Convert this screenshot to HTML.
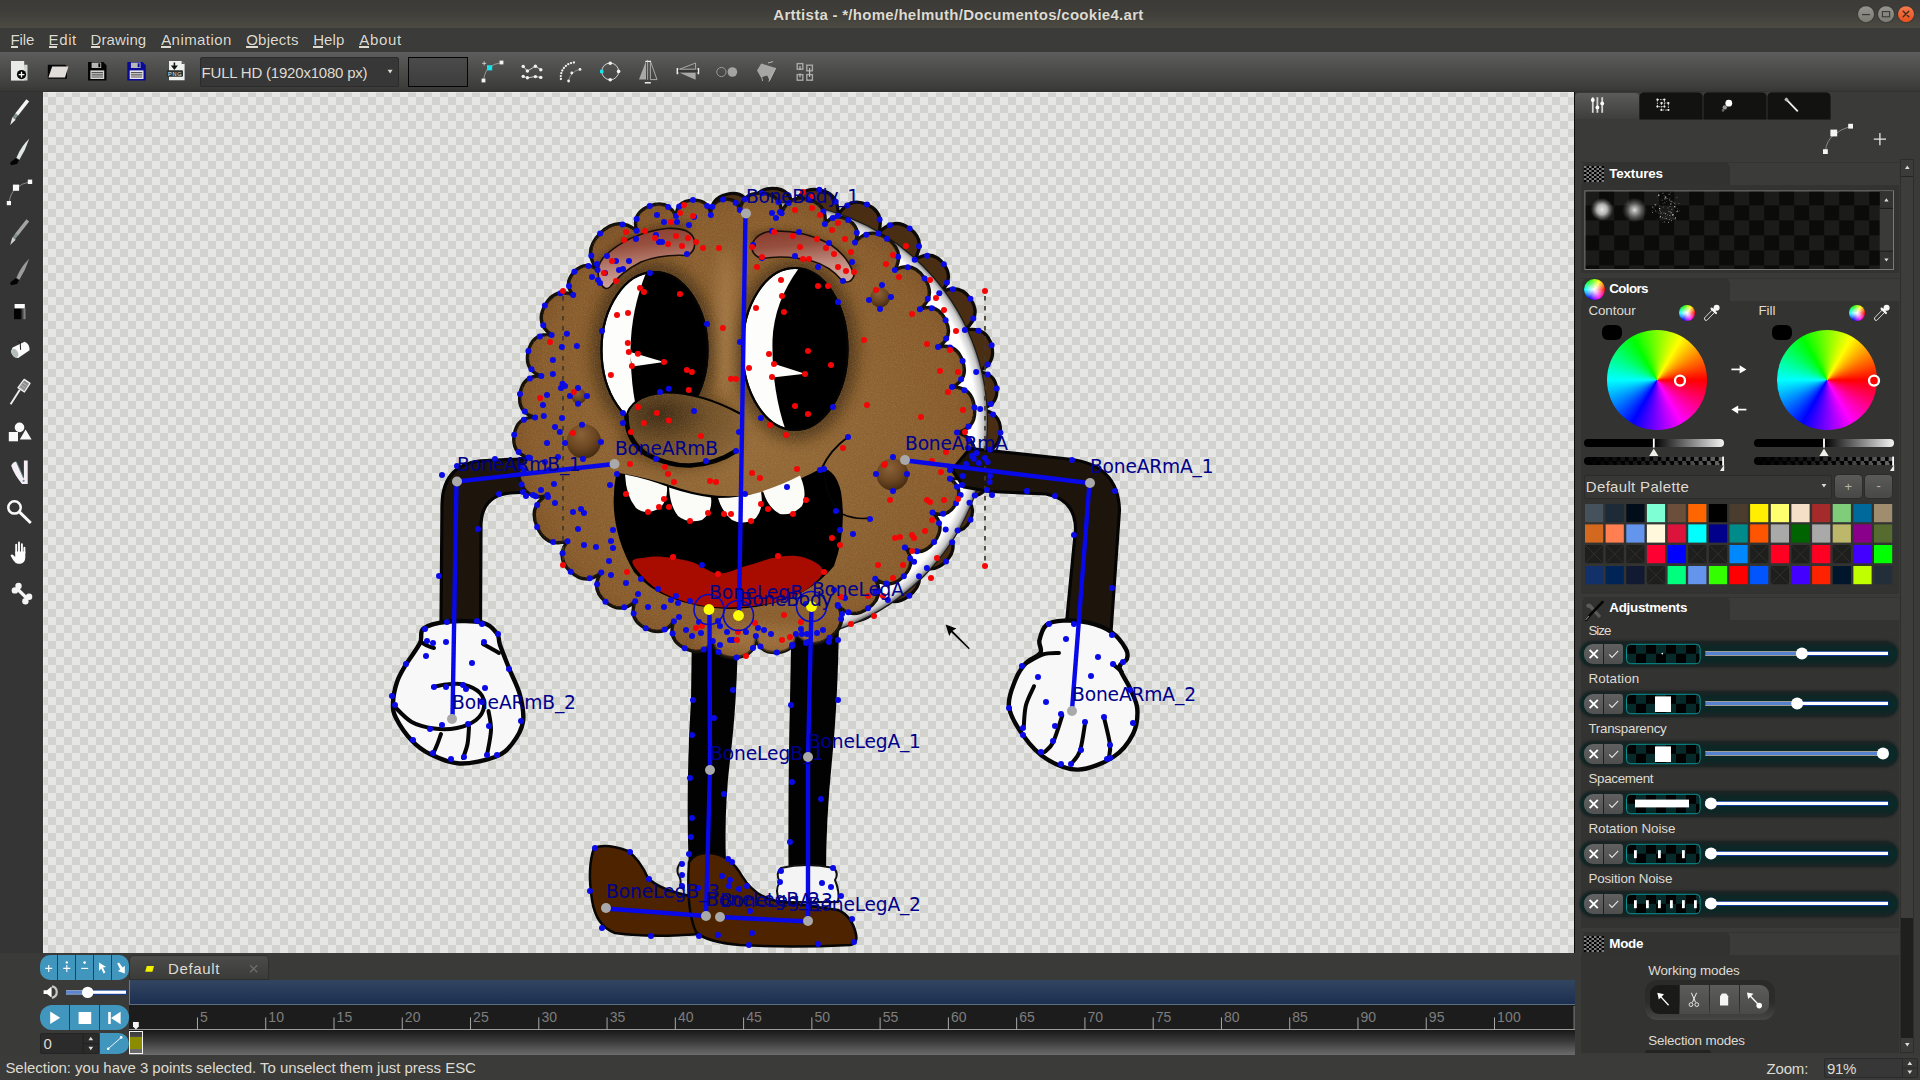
<!DOCTYPE html>
<html lang="en"><head><meta charset="utf-8"><title>Arttista - */home/helmuth/Documentos/cookie4.art</title>
<style>
*{margin:0;padding:0}
html,body{width:1920px;height:1080px;overflow:hidden;background:#3b3b39}
body{position:relative;font-family:"Liberation Sans","DejaVu Sans",sans-serif}
#app{position:absolute;left:0;top:0;width:1920px;height:1080px;overflow:hidden;background:#3b3b39}
#app div,#app svg,#app span,#app i{position:absolute}
.t{white-space:pre;display:block}
svg{overflow:visible;display:block}
.titlebar{left:0;top:0;width:1920px;height:28px;background:linear-gradient(#3c3b37 0,#3e3d39 35%,#4b4a42 100%)}
.titlebar .t,.menubar .t{text-shadow:0 0 1px rgba(0,0,0,.4)}
.menubar,.toolbar,.lefttools,.panel,.timeline,.statusbar{left:0;top:0;width:0;height:0}
.mbg{left:0;top:28px;width:1920px;height:24px;background:#3b3b39}
.tbg{left:0;top:52px;width:1920px;height:40px;background:linear-gradient(#5c5d5c 0,#4e4e4d 40%,#3e3e3d 85%,#373736 97%,#2e2e2d 100%)}
.lbg{left:0;top:92px;width:43px;height:861px;background:#353535}
.pbg{left:1575px;top:92px;width:345px;height:963px;background:#3a3a39}
.bbg{left:0;top:953px;width:1575px;height:102px;background:#3a3a38}
.sbg{left:0;top:1055px;width:1920px;height:25px;background:#3b3b39}
.ul{height:1.4px;background:#dfdbd2;display:block}
.canvas{left:43px;top:92px;width:1531px;height:861px;overflow:hidden;background:#e6e6e4 conic-gradient(#d2d3cf 0 25%,#e6e6e4 0 50%,#d2d3cf 0 75%,#e6e6e4 0) 5px -3px/16px 16px;box-shadow:inset 1px 1px 0 rgba(255,255,255,.3)}
.cedge{left:1574px;top:92px;width:1px;height:861px;background:#0c0c0c}
</style></head>
<body><div id="app">
<div class="mbg"></div><div class="tbg"></div><div class="lbg"></div><div class="pbg"></div><div class="bbg"></div><div class="sbg"></div>
<div class="titlebar"><span class="t" style="left:773.30px;top:5.50px;font:bold 15px/18px 'Liberation Sans','DejaVu Sans',sans-serif;color:#dfdbd2;letter-spacing:0.282px;">Arttista - */home/helmuth/Documentos/cookie4.art</span><svg style="left:1850px;top:0px;" width="70" height="28" viewBox="1850 0 70 28"><defs><linearGradient id="wbg" x1="0" y1="0" x2="0" y2="1"><stop offset="0" stop-color="#95958e"/><stop offset="1" stop-color="#7b7b75"/></linearGradient><linearGradient id="wbr" x1="0" y1="0" x2="0" y2="1"><stop offset="0" stop-color="#f47a4c"/><stop offset="1" stop-color="#e8501c"/></linearGradient></defs><circle cx="1866" cy="14.2" r="9" fill="#33322e" opacity="0.55"/><circle cx="1866" cy="14.2" r="8" fill="url(#wbg)"/><path d="M1862 14.6H1870" stroke="#3a3a36" stroke-width="1.2"/><circle cx="1886" cy="14.2" r="9" fill="#33322e" opacity="0.55"/><circle cx="1886" cy="14.2" r="8" fill="url(#wbg)"/><rect x="1882.4" y="11.6" width="7.2" height="5.2" fill="none" stroke="#3a3a36" stroke-width="1.1"/><circle cx="1906" cy="14.2" r="9" fill="#33322e" opacity="0.55"/><circle cx="1906" cy="14.2" r="8" fill="url(#wbr)"/><path d="M1903.2 11.2L1908.8 16.8M1908.8 11.2L1903.2 16.8" stroke="#3a2a1a" stroke-width="1.3" stroke-linecap="round"/></svg></div>
<div class="menubar"><span class="t mi" style="left:10.50px;top:30.80px;font:normal 15px/18px 'Liberation Sans','DejaVu Sans',sans-serif;color:#dfdbd2;letter-spacing:-0.124px;">File</span><span class="t mi" style="left:48.60px;top:30.80px;font:normal 15px/18px 'Liberation Sans','DejaVu Sans',sans-serif;color:#dfdbd2;letter-spacing:0.614px;">Edit</span><span class="t mi" style="left:90.60px;top:30.80px;font:normal 15px/18px 'Liberation Sans','DejaVu Sans',sans-serif;color:#dfdbd2;letter-spacing:0.095px;">Drawing</span><span class="t mi" style="left:161.20px;top:30.80px;font:normal 15px/18px 'Liberation Sans','DejaVu Sans',sans-serif;color:#dfdbd2;letter-spacing:0.425px;">Animation</span><span class="t mi" style="left:246.20px;top:30.80px;font:normal 15px/18px 'Liberation Sans','DejaVu Sans',sans-serif;color:#dfdbd2;letter-spacing:0.240px;">Objects</span><span class="t mi" style="left:313.20px;top:30.80px;font:normal 15px/18px 'Liberation Sans','DejaVu Sans',sans-serif;color:#dfdbd2;letter-spacing:0.080px;">Help</span><span class="t mi" style="left:359.20px;top:30.80px;font:normal 15px/18px 'Liberation Sans','DejaVu Sans',sans-serif;color:#dfdbd2;letter-spacing:0.724px;">About</span><i class="ul" style="left:10.5px;top:46.3px;width:7.5px"></i><i class="ul" style="left:48.6px;top:46.3px;width:8.5px"></i><i class="ul" style="left:90.6px;top:46.3px;width:9.6px"></i><i class="ul" style="left:161.2px;top:46.3px;width:9.6px"></i><i class="ul" style="left:246.2px;top:46.3px;width:11.5px"></i><i class="ul" style="left:313.2px;top:46.3px;width:9.6px"></i><i class="ul" style="left:359.2px;top:46.3px;width:9.6px"></i></div>
<div class="toolbar"><svg style="left:0px;top:52px;" width="830" height="40" viewBox="0 52 830 40"><path d="M24.2 64.8h3.3v15.8h-4z" fill="#d3d7d3"/><path d="M11 61h13.2v19.6H11z" fill="#e7eae7"/><circle cx="21.5" cy="74.6" r="4.6" fill="#050505"/><path d="M18.6 74.6h5.8M21.5 71.7v5.8" stroke="#fff" stroke-width="1.3"/><path d="M47.8 64.8h17.6l1.6 1.6v12.4H47.8z" fill="#060606"/><path d="M52.2 66.6h16.2l-3.4 11H48.4z" fill="#e2ddd9"/><path d="M88 62h15.2l3.3 3.3v15.3H88z" fill="#050505"/><rect x="91.6" y="62.6" width="9.6" height="5.4" fill="#b8b8b6"/><rect x="98.4" y="63.3" width="1.9" height="3.9" fill="#050505"/><rect x="90.4" y="70.4" width="13.8" height="8.6" fill="#d4d4d2"/><path d="M91.6 72.6h11.4M91.6 74.8h11.4M91.6 77h11.4" stroke="#555" stroke-width="1.2"/><path d="M127.3 62h15.2l3.3 3.3v15.3H127.3z" fill="#0a0a96"/><rect x="130.9" y="62.6" width="9.6" height="5.4" fill="#b8b8b6"/><rect x="137.7" y="63.3" width="1.9" height="3.9" fill="#0a0a96"/><rect x="129.7" y="70.4" width="13.8" height="8.6" fill="#e8e8ee"/><path d="M130.9 72.6h11.4M130.9 74.8h11.4M130.9 77h11.4" stroke="#555" stroke-width="1.2"/><path d="M169 61h12.6l3 3v16.2H169z" fill="#eef0ee"/><path d="M181.6 61l3 3h-3z" fill="#555"/><path d="M174.4 62.6v4.2M172.4 66.2l2 2.6 2-2.6z" stroke="#111" stroke-width="1.5" fill="#111"/><rect x="166.8" y="70.3" width="16.2" height="6.4" rx="1" fill="#2b302d"/><text x="168" y="75.8" font-family="Liberation Sans, sans-serif" font-size="5.6" fill="#e8e8e8" textLength="13.6">PNG</text><path d="M483.5 80.5Q485 70 489.6 67.4Q494 63.6 501.4 62.6" stroke="#aaa" stroke-width="0.8" fill="none"/><rect x="487" y="65.2" width="5.2" height="5.2" fill="#15e4ec"/><rect x="499.6" y="60.6" width="3.8" height="3.8" fill="#f4f4f4"/><rect x="481.6" y="78.6" width="3.8" height="3.8" fill="#f4f4f4"/><path d="M482.2 63.4h4M484.2 61.4v4" stroke="#ddd" stroke-width="0.8"/><path d="M523.2 66.4L527.4 71L535.4 66.2L540.8 69.8" stroke="#ddd" stroke-width="0.9" fill="none"/><circle cx="523.2" cy="66.4" r="1.7" fill="#f2f2f2"/><circle cx="527.4" cy="71" r="1.7" fill="#f2f2f2"/><circle cx="535.4" cy="66.2" r="1.7" fill="#f2f2f2"/><circle cx="540.8" cy="69.8" r="1.7" fill="#f2f2f2"/><path d="M523.2 76.4L527.4 77.8L535.4 76.6L540.8 77.4" stroke="#ddd" stroke-width="0.9" fill="none"/><circle cx="523.2" cy="76.4" r="1.7" fill="#f2f2f2"/><circle cx="527.4" cy="77.8" r="1.7" fill="#f2f2f2"/><circle cx="535.4" cy="76.6" r="1.7" fill="#f2f2f2"/><circle cx="540.8" cy="77.4" r="1.7" fill="#f2f2f2"/><circle cx="560.9" cy="79.0" r="1.15" fill="#f0f0f0"/><circle cx="560.8" cy="76.1" r="1.15" fill="#f0f0f0"/><circle cx="561.3" cy="73.2" r="1.15" fill="#f0f0f0"/><circle cx="562.3" cy="70.5" r="1.15" fill="#f0f0f0"/><circle cx="563.9" cy="68.0" r="1.15" fill="#f0f0f0"/><circle cx="565.9" cy="65.9" r="1.15" fill="#f0f0f0"/><circle cx="568.3" cy="64.2" r="1.15" fill="#f0f0f0"/><circle cx="571.0" cy="63.1" r="1.15" fill="#f0f0f0"/><circle cx="573.9" cy="62.5" r="1.15" fill="#f0f0f0"/><path d="M568.6 81q1.6-9.4 11.4-11.6" stroke="#aaa" stroke-width="0.7" fill="none"/><circle cx="568.6" cy="81" r="1.4" fill="#f0f0f0"/><circle cx="571.8" cy="73" r="1.4" fill="#f0f0f0"/><circle cx="580" cy="69.4" r="1.4" fill="#f0f0f0"/><circle cx="610.2" cy="71.4" r="8.4" fill="none" stroke="#ddd" stroke-width="0.9"/><rect x="600" y="69.8" width="3.4" height="3.4" fill="#15e4ec"/><circle cx="610.2" cy="63.2" r="1.8" fill="#f2f2f2"/><circle cx="618.6" cy="71.4" r="1.8" fill="#f2f2f2"/><circle cx="610.2" cy="79.8" r="1.8" fill="#f2f2f2"/><path d="M639 79.6l7-18.6v18.6z" fill="#a8a8a8"/><path d="M650.4 61l6.6 18.6h-6.6z" fill="none" stroke="#a8a8a8" stroke-width="1"/><path d="M645.4 61.4h5.6M644.8 82.8h6" stroke="#eee" stroke-width="1.4"/><path d="M647.6 59.8v20" stroke="#ccc" stroke-width="0.7"/><path d="M679.6 69.2l16-6.2v6.2z" fill="none" stroke="#a8a8a8" stroke-width="1"/><path d="M679.6 72.8h16v7z" fill="#a8a8a8"/><path d="M677.4 68v6.2M698.4 68v6.2" stroke="#eee" stroke-width="1.6"/><path d="M678 71h20" stroke="#222" stroke-width="1"/><circle cx="721.4" cy="72" r="4.6" fill="none" stroke="#9a9a9a" stroke-width="1"/><circle cx="732.4" cy="72" r="4.8" fill="#a4a4a4"/><path d="M757 70.4l4.2-7 14.6 4.6-6 13-2.6-5.6-6.2 2z" fill="#a6a6a6"/><path d="M768 63l5-1.4M775.8 68l-7 13.6" stroke="#b8b8b8" stroke-width="1" fill="none"/><path d="M761.6 76.4l1 4.6" stroke="#aaa" stroke-width="1"/><rect x="797.2" y="63.6" width="5.6" height="5.6" fill="none" stroke="#a8a8a8" stroke-width="1.4"/><rect x="806.8" y="65.2" width="5.6" height="5.6" fill="none" stroke="#a8a8a8" stroke-width="1.4"/><rect x="797.2" y="74.6" width="5.6" height="5.6" fill="none" stroke="#a8a8a8" stroke-width="1.4"/><rect x="806.8" y="74.6" width="5.6" height="5.6" fill="none" stroke="#a8a8a8" stroke-width="1.4"/><path d="M800 66v4M809.6 68v9M800 73.6v4" stroke="#bbb" stroke-width="1.2"/></svg><div class="a" style="left:200px;top:57px;width:199px;height:30px;background:#373737;border:1px solid #2b2b2b;box-sizing:border-box;border-radius:2px"></div><span class="t" style="left:201.60px;top:63.80px;font:normal 15px/18px 'Liberation Sans','DejaVu Sans',sans-serif;color:#dfdbd2;letter-spacing:-0.208px;">FULL HD (1920x1080 px)</span><svg style="left:386px;top:68px;" width="9" height="7" viewBox="386 68 9 7"><path d="M387.6 69.8h5l-2.5 3.6z" fill="#dfdbd2"/></svg><div class="a" style="left:408px;top:57px;width:60px;height:30px;background:linear-gradient(#4b4b4b,#3d3d3d);border:1px solid #050505;box-sizing:border-box"></div></div>
<div class="lefttools"><svg style="left:0px;top:92px;" width="43" height="530" viewBox="0 92 43 530"><path d="M27.800 100.4L16.400 114.8" stroke="#f4f4f4" stroke-width="3.500" stroke-linecap="butt"/><path d="M16.800 114.3L13.800 118.4" stroke="#83938d" stroke-width="3.300"/><path d="M12.300 117.2L15.700 119.8L10.200 125Z" fill="#e8e8e8"/><path d="M29.200 138.8Q21 146.5 16.400 157.8L19.400 159.8Q25.400 150.5 29.200 138.8z" fill="#dfe9e4"/><path d="M15.600 158.2l3.400 2.300-2 3.600-5.800 1.200-1.200-2.600z" fill="#020202"/><path d="M9 203Q10.4 192.6 16.2 188Q22 183.4 29.8 181.8" stroke="#999" stroke-width="0.8" fill="none"/><rect x="12.9" y="184.6" width="6.2" height="6.2" fill="#fafafa"/><rect x="27.8" y="179.6" width="4.4" height="4.4" fill="#fafafa"/><rect x="6.8" y="201" width="4.2" height="4.2" fill="#fafafa"/><path d="M27.800 220.4L16.400 234.8" stroke="#a4a4a4" stroke-width="3.500" stroke-linecap="butt"/><path d="M16.800 234.3L13.800 238.4" stroke="#83938d" stroke-width="3.300"/><path d="M12.300 237.2L15.700 239.8L10.200 245Z" fill="#cfd4d2"/><path d="M29.200 258.8Q21 266.5 16.400 277.8L19.400 279.8Q25.400 270.5 29.200 258.8z" fill="#9c9c9c"/><path d="M15.600 278.2l3.400 2.300-2 3.600-5.800 1.200-1.200-2.600z" fill="#020202"/><defs><linearGradient id="bk" x1="0" x2="1"><stop offset="0.55" stop-color="#020202"/><stop offset="1" stop-color="#9a9a9a"/></linearGradient></defs><rect x="14.6" y="304" width="10.2" height="4.6" fill="#fbfbfb"/><rect x="14" y="308.6" width="11.4" height="10.6" fill="url(#bk)"/><path d="M12.600 347.600L24.600 341.800Q29.600 343.400 29.600 350.200L18.200 358Q12.200 357.400 11 351.400Z" fill="#fbfbfb"/><ellipse cx="14.900" cy="353.200" rx="3" ry="4.500" transform="rotate(-28 14.900 353.200)" fill="#b4beb8"/><path d="M17.600 341.800q1.400-1.600 2.600 0.600l0.400 7.400" stroke="#1c1c1c" stroke-width="1" fill="none"/><path d="M19.800 389.800L10.600 404.200" stroke="#f0f0f0" stroke-width="1.900"/><path d="M24.200 379.400L30 383.400L24.400 392L18 387.600Z" fill="#8e8e8e" stroke="#f2f2f2" stroke-width="1.300" stroke-linejoin="round"/><path d="M21.200 385.200l4 2.800M22.800 382.800l4 2.800M20 387.400l3.600 2.600" stroke="#d8d8d8" stroke-width="0.600"/><circle cx="19.5" cy="427.4" r="4.8" fill="#fafafa"/><rect x="8.8" y="432" width="9.2" height="9.3" fill="#fafafa"/><path d="M25.6 429.6l6 9.9H19.8z" fill="#fafafa"/><path d="M11.200 465.800Q12.800 461.800 16.200 461.400L23.900 478.400L23.900 460.400L27.700 460.400L27.700 483.900L22 483.900Q14.400 475 11.200 465.800Z" fill="#f5eef7"/><path d="M16.600 462.200l7 16" stroke="#5e8a86" stroke-width="1"/><circle cx="23.600" cy="480.800" r="1.100" fill="#6a9a94"/><circle cx="14.500" cy="507.400" r="6.200" fill="none" stroke="#fbfbfb" stroke-width="2.500"/><path d="M19.600 512.200L30.800 523" stroke="#fbfbfb" stroke-width="3"/><path d="M16.200 553v-8.400M19 552.500v-10M21.900 552.500v-8.400M24.400 553v-5.200" stroke="#fdfdfd" stroke-width="1.900" stroke-linecap="round"/><path d="M15.200 551.500h10.100v6.300q-0.300 5.200-4.600 5.900h-2.800q-2.800-0.500-4.800-3.700l-2.600-4.400q1.300-2 3-0.400l1.700 1.900z" fill="#fdfdfd"/><path d="M17.400 589L27 598.400" stroke="#f4f4f4" stroke-width="3.400"/><circle cx="18.500" cy="585.900" r="3.200" fill="#f4f4f4"/><circle cx="14.900" cy="590.400" r="3.200" fill="#f4f4f4"/><circle cx="29.100" cy="596.800" r="3.200" fill="#f4f4f4"/><circle cx="25.400" cy="601.200" r="3.200" fill="#f4f4f4"/></svg></div>
<div class="canvas"><svg style="left:0;top:0" width="1531" height="861" viewBox="43 92 1531 861"><defs>
<radialGradient id="ckf" cx="745" cy="425" r="235" gradientUnits="userSpaceOnUse"><stop offset="0" stop-color="#956b39"/><stop offset="0.55" stop-color="#8d6232"/><stop offset="0.9" stop-color="#875b2c"/><stop offset="1" stop-color="#7c5126"/></radialGradient>
<radialGradient id="crm" cx="768" cy="421" r="220" gradientUnits="userSpaceOnUse"><stop offset="0" stop-color="#ffffff"/><stop offset="0.945" stop-color="#ffffff"/><stop offset="0.98" stop-color="#c8c8c8"/><stop offset="1" stop-color="#5a5a5a"/></radialGradient>
<radialGradient id="chip" cx="0.42" cy="0.3" r="0.75"><stop offset="0" stop-color="#8a6238"/><stop offset="0.55" stop-color="#6b4621"/><stop offset="1" stop-color="#3f2710"/></radialGradient>
<linearGradient id="brow" x1="0" y1="0" x2="0.2" y2="1"><stop offset="0" stop-color="#87382a"/><stop offset="0.35" stop-color="#97503f"/><stop offset="0.7" stop-color="#bb8679"/><stop offset="1" stop-color="#cda69b"/></linearGradient>
<radialGradient id="nose" cx="0.3" cy="0.3" r="0.85"><stop offset="0" stop-color="#3d2a14"/><stop offset="0.5" stop-color="#6f4f28"/><stop offset="1" stop-color="#8a6436"/></radialGradient>
<filter id="bl6" x="-30%" y="-30%" width="160%" height="160%"><feGaussianBlur stdDeviation="7"/></filter>
<filter id="bl3" x="-30%" y="-30%" width="160%" height="160%"><feGaussianBlur stdDeviation="3"/></filter>
<filter id="grain" x="0" y="0" width="100%" height="100%"><feTurbulence type="fractalNoise" baseFrequency="0.9" numOctaves="2" seed="4" result="n"/><feColorMatrix in="n" type="matrix" values="0 0 0 0 0.62  0 0 0 0 0.42  0 0 0 0 0.2  1.2 0 0 0 -0.45"/><feComposite in2="SourceGraphic" operator="in"/></filter>
<clipPath id="fcclip"><path d="M541.3 376.1C529.7 371.9 525.3 363.3 528.4 351.0C531.5 338.6 539.4 333.2 551.6 335.0C540.7 327.5 538.4 317.5 544.9 305.5C551.3 293.5 561.0 290.0 573.2 295.0C566.7 287.2 567.1 279.3 574.4 271.7C581.7 264.2 589.6 263.6 597.6 269.9C587.6 257.5 588.4 245.1 600.1 233.4C611.8 221.7 624.2 220.8 636.6 230.8C633.4 218.9 637.9 210.5 649.7 206.0C661.5 201.5 670.5 204.9 676.0 215.9C676.7 205.8 682.5 200.4 693.0 200.1C703.4 199.9 709.5 204.9 710.8 215.0C710.2 206.4 714.4 201.2 723.1 199.6C731.9 198.1 737.6 201.7 739.9 210.0C742.2 198.0 749.7 192.3 762.2 193.3C774.8 194.3 781.4 201.1 781.6 213.3C786.0 201.1 795.0 196.4 808.0 199.6C821.0 202.8 826.7 211.1 824.9 224.0C831.2 215.8 839.0 214.5 848.1 220.0C857.1 225.5 859.4 233.2 855.0 242.5C864.1 231.7 875.0 230.4 887.0 238.7C899.0 246.9 901.7 257.5 894.9 270.0C907.0 263.9 917.2 266.8 924.7 278.6C932.2 290.3 930.6 300.8 919.9 309.2C931.5 305.1 940.2 308.8 945.6 320.2C951.1 331.5 948.5 340.7 938.0 347.0C950.1 344.2 958.4 348.9 962.6 360.9C966.8 372.9 963.2 381.8 952.0 387.0C965.3 386.9 973.0 393.9 974.5 407.6C976.0 421.2 970.0 429.7 957.0 432.5C970.2 435.9 975.9 444.9 973.8 458.7C971.7 472.6 963.6 479.5 949.9 478.8C959.1 484.9 961.2 493.2 956.0 503.3C950.8 513.4 942.8 516.5 932.5 512.5C941.8 521.5 942.4 531.6 934.1 542.1C925.9 552.6 915.9 554.5 904.9 547.5C913.1 557.1 912.7 566.8 903.8 576.2C894.8 585.5 885.1 586.4 875.2 578.7C881.7 590.4 879.2 600.4 868.0 608.3C856.7 616.2 846.4 615.0 837.7 604.9C844.8 617.9 842.1 629.1 829.5 637.8C817.0 646.6 805.6 645.2 795.9 634.0C795.3 645.6 788.8 652.0 776.8 652.6C764.8 653.2 757.7 647.6 755.9 636.0C756.1 648.7 749.5 656.0 736.6 657.5C723.7 659.0 715.6 653.4 712.8 641.1C705.9 651.8 696.4 654.2 684.7 648.3C673.0 642.4 669.4 633.2 673.9 621.3C666.9 632.0 657.3 634.3 645.7 628.3C634.0 622.3 630.5 613.0 635.2 601.2C625.8 610.1 615.7 610.3 605.5 601.7C595.4 593.0 593.9 583.1 601.3 572.4C591.2 581.3 580.8 581.0 570.7 571.7C560.5 562.3 559.4 552.0 567.5 541.2C553.4 545.7 543.1 540.8 537.1 526.9C531.1 513.0 534.6 502.2 547.4 495.0C536.0 499.3 527.3 495.7 521.6 484.5C516.0 473.3 518.4 464.2 528.7 457.6C517.2 454.6 512.3 446.8 514.2 434.7C516.1 422.6 523.2 416.7 535.1 417.4C523.3 414.3 518.2 406.4 520.0 394.0C521.9 381.6 529.1 375.5 541.3 376.1Z"/></clipPath>
<clipPath id="eyeL"><ellipse cx="654.500" cy="350" rx="53" ry="78"/></clipPath>
<clipPath id="eyeR"><ellipse cx="795" cy="349" rx="52.500" ry="81"/></clipPath>
</defs><path d="M980.2 409.0C994.6 411.5 1001.4 419.5 1000.4 432.7C999.3 445.9 991.2 452.7 976.6 452.9C990.0 459.4 994.4 469.3 989.6 481.9C984.8 494.5 974.9 498.9 960.6 494.9C971.6 500.8 975.0 509.3 970.5 519.7C966.0 530.1 957.6 533.4 945.7 529.6C955.3 540.9 955.5 551.8 946.0 561.4C936.5 571.1 925.7 571.2 914.1 561.8C922.6 575.2 921.0 586.8 909.3 595.7C897.7 604.7 886.1 603.3 875.3 591.6C879.6 604.7 876.0 614.0 864.6 618.9C853.2 623.9 843.9 620.2 837.3 608.2C838.3 621.7 832.6 629.8 820.5 631.9C808.4 633.9 800.3 628.2 796.8 615.1C796.8 629.3 790.1 637.2 777.2 638.3C764.4 639.4 756.5 632.8 754.0 618.7C749.8 632.1 741.2 637.5 728.8 634.8C716.5 632.0 711.0 623.5 712.8 609.6C704.8 621.8 694.6 624.9 683.0 618.7C671.3 612.5 668.2 602.3 673.8 588.8C665.0 600.2 654.8 602.5 643.8 595.4C632.8 588.4 630.6 578.2 637.2 565.4C626.4 572.4 617.1 571.4 609.9 562.2C602.7 553.1 603.7 543.8 613.1 534.9C599.2 542.2 588.0 539.8 580.3 527.9C572.5 515.9 574.9 504.8 587.3 495.1C573.9 498.8 564.8 494.6 560.4 482.8C556.0 471.1 560.2 461.9 572.6 455.9C558.3 456.2 550.2 449.7 548.8 436.8C547.4 423.9 553.9 415.8 567.9 412.9C554.8 410.2 548.7 402.6 550.1 390.6C551.5 378.5 559.1 372.4 572.5 372.7C559.0 367.4 554.0 358.2 557.7 345.6C561.4 333.0 570.7 328.0 584.8 330.8C573.0 320.9 571.0 309.8 579.1 298.3C587.1 286.8 598.2 284.8 611.6 292.5C603.2 283.9 602.6 275.2 609.6 267.0C616.7 258.7 625.4 258.0 635.2 265.0C626.7 251.5 628.4 239.9 640.2 230.8C652.0 221.7 663.7 223.0 674.6 234.6C670.6 222.1 674.2 213.2 685.2 208.6C696.2 203.9 705.1 207.5 711.3 219.2C709.4 205.5 714.8 197.0 726.9 194.2C739.1 191.4 747.6 196.7 751.9 209.9C752.7 196.1 759.5 188.8 771.9 188.4C784.4 188.0 791.7 194.8 793.4 208.4C797.2 193.9 806.0 187.6 819.4 189.8C832.7 192.1 839.0 200.9 837.9 215.8C845.0 203.0 854.9 199.1 867.0 204.5C879.1 209.8 883.0 219.7 878.4 233.5C888.1 222.3 898.7 220.6 909.6 228.4C920.6 236.3 922.3 246.9 914.7 259.7C926.5 252.6 936.4 254.1 943.8 264.2C951.2 274.2 949.6 284.1 939.3 293.2C952.2 285.9 962.8 287.8 970.4 298.8C978.1 309.8 976.2 320.4 964.9 329.9C979.1 327.4 988.2 332.7 991.6 345.3C995.0 357.9 989.7 367.0 976.2 372.0C988.5 371.8 995.5 377.4 996.7 388.5C997.9 399.6 992.3 406.5 980.2 409.0Z" fill="#4a2e13" stroke="#0c0a08" stroke-width="3.200" stroke-linejoin="round"/><circle cx="768" cy="421.500" r="219.500" fill="url(#crm)" stroke="#1a1a1a" stroke-width="1.200"/><path d="M552 457.500L486 460.500Q443 462 442 504L441 624L480.500 624L481 524Q482 496 510 493L552 491Z" fill="#1d150b" stroke="#050505" stroke-width="3.200" stroke-linejoin="round"/><path d="M692 625L738 625Q737.500 700 730 760Q724 810 726 862L688.500 862Q686 780 691 700Z" fill="#020202"/><path d="M791.500 620L839 620Q838 700 832 760Q826 820 826 872L788.500 872Q788 780 790 700Z" fill="#020202"/><path d="M541.3 376.1C529.7 371.9 525.3 363.3 528.4 351.0C531.5 338.6 539.4 333.2 551.6 335.0C540.7 327.5 538.4 317.5 544.9 305.5C551.3 293.5 561.0 290.0 573.2 295.0C566.7 287.2 567.1 279.3 574.4 271.7C581.7 264.2 589.6 263.6 597.6 269.9C587.6 257.5 588.4 245.1 600.1 233.4C611.8 221.7 624.2 220.8 636.6 230.8C633.4 218.9 637.9 210.5 649.7 206.0C661.5 201.5 670.5 204.9 676.0 215.9C676.7 205.8 682.5 200.4 693.0 200.1C703.4 199.9 709.5 204.9 710.8 215.0C710.2 206.4 714.4 201.2 723.1 199.6C731.9 198.1 737.6 201.7 739.9 210.0C742.2 198.0 749.7 192.3 762.2 193.3C774.8 194.3 781.4 201.1 781.6 213.3C786.0 201.1 795.0 196.4 808.0 199.6C821.0 202.8 826.7 211.1 824.9 224.0C831.2 215.8 839.0 214.5 848.1 220.0C857.1 225.5 859.4 233.2 855.0 242.5C864.1 231.7 875.0 230.4 887.0 238.7C899.0 246.9 901.7 257.5 894.9 270.0C907.0 263.9 917.2 266.8 924.7 278.6C932.2 290.3 930.6 300.8 919.9 309.2C931.5 305.1 940.2 308.8 945.6 320.2C951.1 331.5 948.5 340.7 938.0 347.0C950.1 344.2 958.4 348.9 962.6 360.9C966.8 372.9 963.2 381.8 952.0 387.0C965.3 386.9 973.0 393.9 974.5 407.6C976.0 421.2 970.0 429.7 957.0 432.5C970.2 435.9 975.9 444.9 973.8 458.7C971.7 472.6 963.6 479.5 949.9 478.8C959.1 484.9 961.2 493.2 956.0 503.3C950.8 513.4 942.8 516.5 932.5 512.5C941.8 521.5 942.4 531.6 934.1 542.1C925.9 552.6 915.9 554.5 904.9 547.5C913.1 557.1 912.7 566.8 903.8 576.2C894.8 585.5 885.1 586.4 875.2 578.7C881.7 590.4 879.2 600.4 868.0 608.3C856.7 616.2 846.4 615.0 837.7 604.9C844.8 617.9 842.1 629.1 829.5 637.8C817.0 646.6 805.6 645.2 795.9 634.0C795.3 645.6 788.8 652.0 776.8 652.6C764.8 653.2 757.7 647.6 755.9 636.0C756.1 648.7 749.5 656.0 736.6 657.5C723.7 659.0 715.6 653.4 712.8 641.1C705.9 651.8 696.4 654.2 684.7 648.3C673.0 642.4 669.4 633.2 673.9 621.3C666.9 632.0 657.3 634.3 645.7 628.3C634.0 622.3 630.5 613.0 635.2 601.2C625.8 610.1 615.7 610.3 605.5 601.7C595.4 593.0 593.9 583.1 601.3 572.4C591.2 581.3 580.8 581.0 570.7 571.7C560.5 562.3 559.4 552.0 567.5 541.2C553.4 545.7 543.1 540.8 537.1 526.9C531.1 513.0 534.6 502.2 547.4 495.0C536.0 499.3 527.3 495.7 521.6 484.5C516.0 473.3 518.4 464.2 528.7 457.6C517.2 454.6 512.3 446.8 514.2 434.7C516.1 422.6 523.2 416.7 535.1 417.4C523.3 414.3 518.2 406.4 520.0 394.0C521.9 381.6 529.1 375.5 541.3 376.1Z" fill="url(#ckf)" stroke="#14100a" stroke-width="3.400" stroke-linejoin="round"/><g clip-path="url(#fcclip)"><g filter="url(#bl6)" opacity="0.620"><ellipse cx="654" cy="350" rx="63" ry="89" fill="#33200a"/><ellipse cx="796" cy="350" rx="62" ry="91" fill="#33200a"/><ellipse cx="680" cy="430" rx="60" ry="38" fill="#3d2710"/></g><g filter="url(#bl6)" opacity="0.500"><ellipse cx="726" cy="320" rx="9" ry="72" fill="#b98d5a"/><ellipse cx="760" cy="640" rx="60" ry="14" fill="#b08350"/></g><g filter="url(#bl3)" opacity="0.450"><path d="M596 270Q630 226 690 226" stroke="#3a240c" stroke-width="10" fill="none"/><path d="M752 238Q810 222 856 270" stroke="#3a240c" stroke-width="10" fill="none"/></g><path d="M541.3 376.1C529.7 371.9 525.3 363.3 528.4 351.0C531.5 338.6 539.4 333.2 551.6 335.0C540.7 327.5 538.4 317.5 544.9 305.5C551.3 293.5 561.0 290.0 573.2 295.0C566.7 287.2 567.1 279.3 574.4 271.7C581.7 264.2 589.6 263.6 597.6 269.9C587.6 257.5 588.4 245.1 600.1 233.4C611.8 221.7 624.2 220.8 636.6 230.8C633.4 218.9 637.9 210.5 649.7 206.0C661.5 201.5 670.5 204.9 676.0 215.9C676.7 205.8 682.5 200.4 693.0 200.1C703.4 199.9 709.5 204.9 710.8 215.0C710.2 206.4 714.4 201.2 723.1 199.6C731.9 198.1 737.6 201.7 739.9 210.0C742.2 198.0 749.7 192.3 762.2 193.3C774.8 194.3 781.4 201.1 781.6 213.3C786.0 201.1 795.0 196.4 808.0 199.6C821.0 202.8 826.7 211.1 824.9 224.0C831.2 215.8 839.0 214.5 848.1 220.0C857.1 225.5 859.4 233.2 855.0 242.5C864.1 231.7 875.0 230.4 887.0 238.7C899.0 246.9 901.7 257.5 894.9 270.0C907.0 263.9 917.2 266.8 924.7 278.6C932.2 290.3 930.6 300.8 919.9 309.2C931.5 305.1 940.2 308.8 945.6 320.2C951.1 331.5 948.5 340.7 938.0 347.0C950.1 344.2 958.4 348.9 962.6 360.9C966.8 372.9 963.2 381.8 952.0 387.0C965.3 386.9 973.0 393.9 974.5 407.6C976.0 421.2 970.0 429.7 957.0 432.5C970.2 435.9 975.9 444.9 973.8 458.7C971.7 472.6 963.6 479.5 949.9 478.8C959.1 484.9 961.2 493.2 956.0 503.3C950.8 513.4 942.8 516.5 932.5 512.5C941.8 521.5 942.4 531.6 934.1 542.1C925.9 552.6 915.9 554.5 904.9 547.5C913.1 557.1 912.7 566.8 903.8 576.2C894.8 585.5 885.1 586.4 875.2 578.7C881.7 590.4 879.2 600.4 868.0 608.3C856.7 616.2 846.4 615.0 837.7 604.9C844.8 617.9 842.1 629.1 829.5 637.8C817.0 646.6 805.6 645.2 795.9 634.0C795.3 645.6 788.8 652.0 776.8 652.6C764.8 653.2 757.7 647.6 755.9 636.0C756.1 648.7 749.5 656.0 736.6 657.5C723.7 659.0 715.6 653.4 712.8 641.1C705.9 651.8 696.4 654.2 684.7 648.3C673.0 642.4 669.4 633.2 673.9 621.3C666.9 632.0 657.3 634.3 645.7 628.3C634.0 622.3 630.5 613.0 635.2 601.2C625.8 610.1 615.7 610.3 605.5 601.7C595.4 593.0 593.9 583.1 601.3 572.4C591.2 581.3 580.8 581.0 570.7 571.7C560.5 562.3 559.4 552.0 567.5 541.2C553.4 545.7 543.1 540.8 537.1 526.9C531.1 513.0 534.6 502.2 547.4 495.0C536.0 499.3 527.3 495.7 521.6 484.5C516.0 473.3 518.4 464.2 528.7 457.6C517.2 454.6 512.3 446.8 514.2 434.7C516.1 422.6 523.2 416.7 535.1 417.4C523.3 414.3 518.2 406.4 520.0 394.0C521.9 381.6 529.1 375.5 541.3 376.1Z" fill="#fff" filter="url(#grain)" opacity="0.350"/></g><circle cx="583.8" cy="441.3" r="17.2" fill="url(#chip)"/><circle cx="892.5" cy="474.5" r="16" fill="url(#chip)"/><circle cx="578.8" cy="396.3" r="7.5" fill="url(#chip)"/><circle cx="880" cy="297.5" r="10" fill="url(#chip)"/><path d="M601 284Q594 270 603 258Q626 234 666 228.500Q690 227 694 239Q697 251 687 255.500Q661 254 641 262Q621 272 610 287Q605 291 601 284Z" fill="url(#brow)" stroke="#1a0e08" stroke-width="1.600"/><path d="M751.500 246Q755 233 772 231Q804 230 830 244Q850 258 854 276Q850 285 842 280.500Q830 266 812 261Q786 254.500 762 258.500Q752 256 751.500 246Z" fill="url(#brow)" stroke="#1a0e08" stroke-width="1.600"/><ellipse cx="654.500" cy="350" rx="53" ry="78" fill="#fdfdfb" stroke="#050505" stroke-width="2"/><path clip-path="url(#eyeL)" d="M648 268Q631 308 630.500 350Q631 400 643 432L720 432L720 268Z" fill="#000"/><path d="M628.750 351.500L664 362L632.500 366.500Z" fill="#fdfdfb"/><ellipse cx="654.500" cy="350" rx="53" ry="78" fill="none" stroke="#050505" stroke-width="2.200"/><ellipse cx="795" cy="349" rx="52.500" ry="81" fill="#fdfdfb" stroke="#050505" stroke-width="2"/><path clip-path="url(#eyeR)" d="M802 264Q774 300 772.500 340Q771.500 392 787 434L860 434L860 264Z" fill="#000"/><path d="M770 362.500L805 373.800L772.500 377.500Z" fill="#fdfdfb"/><ellipse cx="795" cy="349" rx="52.500" ry="81" fill="none" stroke="#050505" stroke-width="2.200"/><path d="M616.500 472.500Q650 478 680 488.500Q726 503 770 490.500Q800 480 822 468Q836 470 841 492Q847 530 834 566Q800 608 728 609Q662 606 634 572Q606 524 616.500 472.500Z" fill="#000"/><path d="M625 474.500Q646 478.500 667 486.500Q668 500 660 508Q646 516 636 508Q626 496 625 474.500Z" fill="#fbfbf8"/><path d="M669 487.500Q690 494.500 711 497.500Q713 512 702 520Q688 524 678 516Q670 506 669 487.500Z" fill="#fbfbf8"/><path d="M718 498Q740 498 761 492Q764 508 756 518Q744 526 732 520Q722 512 718 498Z" fill="#fbfbf8"/><path d="M763 491Q784 484 800 475.500Q808 494 802 506Q792 516 780 514Q768 508 763 491Z" fill="#fbfbf8"/><path d="M632.5 563.0C630.8 557.8 640.8 558.5 646.0 557.5C651.2 556.5 656.3 556.2 664.0 557.0C671.7 557.8 683.0 559.2 692.0 562.0C701.0 564.8 709.0 572.8 718.0 573.5C727.0 574.2 736.0 568.8 746.0 566.0C756.0 563.2 768.3 558.4 778.0 557.0C787.7 555.6 796.5 555.2 804.0 557.5C811.5 559.8 823.0 565.4 823.0 571.0C823.0 576.6 812.5 585.7 804.0 591.0C795.5 596.3 784.7 600.2 772.0 603.0C759.3 605.8 741.7 607.5 728.0 607.5C714.3 607.5 702.0 606.2 690.0 603.0C678.0 599.8 665.6 595.2 656.0 588.5C646.4 581.8 634.2 568.2 632.5 563.0Z" fill="#a80b00"/><path d="M822 468Q830 450 848 437" fill="none" stroke="#050505" stroke-width="2" stroke-linecap="round"/><path d="M824 470Q826 500 842 514Q856 520 870 518" fill="none" stroke="#050505" stroke-width="1.500" stroke-linecap="round"/><path d="M625 421Q629 397 664 392.500Q700 392 740 413.500Q743 440 736 451Q712 464 680 464Q638 454 625 421Z" fill="url(#nose)"/><path d="M625 421Q629 397 664 392.500Q700 392 740 413.500Q743 440 736 451Q712 464 680 464Q638 454 625 421Z" fill="#fff" filter="url(#grain)" opacity="0.300"/><path d="M626 418Q630 396 664 392.500Q700 392 740 413.500" fill="none" stroke="#020202" stroke-width="2.200"/><path d="M626.500 416Q626 440 646 454Q668 466 690 465.500Q716 464 736 451" fill="none" stroke="#020202" stroke-width="4.600" stroke-linecap="round"/><path d="M970 448.500L1068 459Q1118 464 1119.500 510L1111 632L1066 628L1075.500 530Q1076 500 1046 494L990 491.500L964 487L952 470Z" fill="#1d150b" stroke="#050505" stroke-width="3.200" stroke-linejoin="round"/><path d="M781 868Q806 862 834 868Q839 874 835 880Q840 892 838 902L780 902Q774 890 780 882Q775 874 781 868Z" fill="#f4f4f4" stroke="#111" stroke-width="2"/><path d="M681 862Q676 868 678 874Q682 880 680 886" fill="none" stroke="#111" stroke-width="2"/><path d="M594 848Q606 843 628 851Q640 860 648 878Q660 890 690 896L700 934Q650 938 615 933Q596 926 592 900Q587 868 594 848Z" fill="#4e2300" stroke="#060606" stroke-width="2.500" stroke-linejoin="round"/><path d="M689 862Q695 852 710 853Q730 855 742 876Q754 896 776 901Q810 906 838 910Q852 916 856 934Q858 944 850 945Q790 948 740 945Q706 942 696 932Q686 910 689 862Z" fill="#4e2300" stroke="#060606" stroke-width="2.500" stroke-linejoin="round"/><path d="M420.0 643.0C423.0 636.9 419.0 632.0 423.5 628.5C428.0 625.0 437.2 622.7 447.0 621.7C456.8 620.7 474.2 620.7 482.5 622.7C490.8 624.7 494.1 629.8 497.0 633.5C499.9 637.2 497.9 639.0 500.0 645.0C502.1 651.0 506.3 661.3 509.6 669.6C512.9 677.9 517.8 686.3 520.0 695.0C522.2 703.7 524.3 713.5 523.0 721.7C521.7 729.9 516.7 738.1 512.0 744.0C507.3 749.9 503.7 753.8 495.0 757.0C486.3 760.2 470.4 764.0 459.6 763.5C448.8 763.0 438.0 757.9 430.0 754.0C422.0 750.1 417.4 746.4 411.7 740.4C406.0 734.4 399.1 724.2 396.0 718.0C392.9 711.8 392.8 709.0 393.0 703.0C393.2 697.0 394.9 688.3 397.0 682.0C399.1 675.7 401.6 671.9 405.4 665.4C409.2 658.9 417.0 649.1 420.0 643.0Z" fill="#f8f8f8" stroke="#060606" stroke-width="4.400" stroke-linejoin="round"/><path d="M421.0 642.0C422.2 642.7 425.8 645.0 428.0 646.0C430.2 647.0 433.0 647.7 434.0 648.0" fill="none" stroke="#060606" stroke-width="4" stroke-linecap="round"/><path d="M483.0 644.0C484.5 644.8 489.3 647.5 492.0 649.0C494.7 650.5 497.8 652.3 499.0 653.0" fill="none" stroke="#060606" stroke-width="4" stroke-linecap="round"/><path d="M433.0 687.0C435.2 686.6 441.0 684.9 446.0 684.5C451.0 684.1 457.3 683.1 463.0 684.5C468.7 685.9 476.5 689.2 480.0 693.0C483.5 696.8 484.7 702.5 484.0 707.0C483.3 711.5 480.5 716.5 476.0 720.0C471.5 723.5 464.0 726.6 457.0 728.0C450.0 729.4 441.6 729.5 434.0 728.5C426.4 727.5 418.4 725.8 411.7 722.0C405.0 718.2 396.9 708.7 394.0 706.0" fill="none" stroke="#060606" stroke-width="4" stroke-linecap="round"/><path d="M441.0 734.0C440.3 735.8 438.3 741.7 437.0 745.0C435.7 748.3 433.7 752.5 433.0 754.0" fill="none" stroke="#060606" stroke-width="4" stroke-linecap="round"/><path d="M469.0 727.0C468.8 729.8 468.5 738.8 467.5 744.0C466.5 749.2 463.8 755.7 463.0 758.0" fill="none" stroke="#060606" stroke-width="4" stroke-linecap="round"/><path d="M488.5 711.0C488.9 714.2 491.2 722.7 491.0 730.0C490.8 737.3 487.7 750.8 487.0 755.0" fill="none" stroke="#060606" stroke-width="4" stroke-linecap="round"/><path d="M1040.4 653.0C1042.7 649.2 1038.4 645.1 1039.4 640.4C1040.5 635.7 1042.7 628.1 1046.7 624.8C1050.7 621.5 1056.4 621.0 1063.3 620.6C1070.2 620.2 1080.3 620.8 1088.3 622.7C1096.3 624.6 1105.0 627.7 1111.3 632.0C1117.5 636.3 1123.2 644.2 1125.8 648.8C1128.4 653.2 1127.9 655.9 1126.9 659.0C1125.9 662.1 1119.1 662.6 1119.6 667.5C1120.1 672.4 1127.0 681.4 1130.0 688.3C1133.0 695.2 1136.8 701.4 1137.3 709.0C1137.8 716.6 1137.0 726.0 1133.0 734.0C1129.0 742.0 1122.5 751.1 1113.3 757.0C1104.1 762.9 1089.1 769.3 1078.0 769.6C1066.9 769.9 1055.7 764.6 1046.7 759.0C1037.7 753.4 1030.0 744.9 1023.8 736.2C1017.5 727.6 1010.4 716.4 1009.0 707.0C1007.6 697.6 1012.6 687.3 1015.4 680.0C1018.2 672.7 1021.6 667.8 1025.8 663.3C1030.0 658.8 1038.1 656.8 1040.4 653.0Z" fill="#f8f8f8" stroke="#060606" stroke-width="4.400" stroke-linejoin="round"/><path d="M1025.0 664.0C1027.9 662.4 1036.8 656.3 1042.5 654.5C1048.2 652.7 1056.2 653.2 1059.0 653.0" fill="none" stroke="#060606" stroke-width="4" stroke-linecap="round"/><path d="M1113.3 664.4C1114.7 665.6 1120.3 670.5 1121.7 671.7" fill="none" stroke="#060606" stroke-width="4" stroke-linecap="round"/><path d="M1034.0 686.2C1032.7 689.4 1027.7 698.4 1026.0 705.0C1024.3 711.6 1024.1 722.3 1023.8 725.8" fill="none" stroke="#060606" stroke-width="4" stroke-linecap="round"/><path d="M1062.3 715.4C1060.8 719.9 1056.0 736.4 1053.0 742.5C1050.0 748.6 1046.0 750.4 1044.6 752.0" fill="none" stroke="#060606" stroke-width="4" stroke-linecap="round"/><path d="M1085.0 723.8C1084.2 728.3 1082.2 744.2 1080.0 750.8C1077.8 757.4 1073.1 761.2 1071.7 763.3" fill="none" stroke="#060606" stroke-width="4" stroke-linecap="round"/><path d="M1104.0 717.5C1105.0 722.0 1109.2 738.0 1110.0 744.6C1110.8 751.2 1109.2 754.9 1109.0 757.0" fill="none" stroke="#060606" stroke-width="4" stroke-linecap="round"/><path d="M563 296V562M985 296V562" stroke="#40392c" stroke-width="1.700" stroke-dasharray="4.600 5.400" fill="none"/><circle cx="541.3" cy="376.1" r="3.0" fill="#0a0ae6"/><circle cx="551.6" cy="335.0" r="3.0" fill="#0a0ae6"/><circle cx="573.2" cy="295.0" r="3.0" fill="#0a0ae6"/><circle cx="597.6" cy="269.9" r="3.0" fill="#0a0ae6"/><circle cx="636.6" cy="230.8" r="3.0" fill="#0a0ae6"/><circle cx="676.0" cy="215.9" r="3.0" fill="#0a0ae6"/><circle cx="710.8" cy="215.0" r="3.0" fill="#0a0ae6"/><circle cx="739.9" cy="210.0" r="3.0" fill="#0a0ae6"/><circle cx="781.6" cy="213.3" r="3.0" fill="#0a0ae6"/><circle cx="824.9" cy="224.0" r="3.0" fill="#0a0ae6"/><circle cx="855.0" cy="242.5" r="3.0" fill="#0a0ae6"/><circle cx="894.9" cy="270.0" r="3.0" fill="#0a0ae6"/><circle cx="919.9" cy="309.2" r="3.0" fill="#0a0ae6"/><circle cx="938.0" cy="347.0" r="3.0" fill="#0a0ae6"/><circle cx="952.0" cy="387.0" r="3.0" fill="#0a0ae6"/><circle cx="957.0" cy="432.5" r="3.0" fill="#0a0ae6"/><circle cx="949.9" cy="478.8" r="3.0" fill="#0a0ae6"/><circle cx="932.5" cy="512.5" r="3.0" fill="#0a0ae6"/><circle cx="904.9" cy="547.5" r="3.0" fill="#0a0ae6"/><circle cx="875.2" cy="578.7" r="3.0" fill="#0a0ae6"/><circle cx="837.7" cy="604.9" r="3.0" fill="#0a0ae6"/><circle cx="795.9" cy="634.0" r="3.0" fill="#0a0ae6"/><circle cx="755.9" cy="636.0" r="3.0" fill="#0a0ae6"/><circle cx="712.8" cy="641.1" r="3.0" fill="#0a0ae6"/><circle cx="673.9" cy="621.3" r="3.0" fill="#0a0ae6"/><circle cx="635.2" cy="601.2" r="3.0" fill="#0a0ae6"/><circle cx="601.3" cy="572.4" r="3.0" fill="#0a0ae6"/><circle cx="567.5" cy="541.2" r="3.0" fill="#0a0ae6"/><circle cx="547.4" cy="495.0" r="3.0" fill="#0a0ae6"/><circle cx="528.7" cy="457.6" r="3.0" fill="#0a0ae6"/><circle cx="535.1" cy="417.4" r="3.0" fill="#0a0ae6"/><circle cx="531.5" cy="369.3" r="3.0" fill="#0a0ae6"/><circle cx="528.4" cy="351.0" r="3.0" fill="#0a0ae6"/><circle cx="539.8" cy="336.4" r="3.0" fill="#0a0ae6"/><circle cx="543.3" cy="325.3" r="3.0" fill="#0a0ae6"/><circle cx="544.9" cy="305.5" r="3.0" fill="#0a0ae6"/><circle cx="560.5" cy="293.3" r="3.0" fill="#0a0ae6"/><circle cx="569.0" cy="286.1" r="3.0" fill="#0a0ae6"/><circle cx="574.4" cy="271.7" r="3.0" fill="#0a0ae6"/><circle cx="588.5" cy="266.0" r="3.0" fill="#0a0ae6"/><circle cx="591.3" cy="255.8" r="3.0" fill="#0a0ae6"/><circle cx="600.1" cy="233.4" r="3.0" fill="#0a0ae6"/><circle cx="622.5" cy="224.5" r="3.0" fill="#0a0ae6"/><circle cx="636.6" cy="218.9" r="3.0" fill="#0a0ae6"/><circle cx="649.7" cy="206.0" r="3.0" fill="#0a0ae6"/><circle cx="668.1" cy="207.0" r="3.0" fill="#0a0ae6"/><circle cx="679.2" cy="206.6" r="3.0" fill="#0a0ae6"/><circle cx="693.0" cy="200.1" r="3.0" fill="#0a0ae6"/><circle cx="707.1" cy="205.9" r="3.0" fill="#0a0ae6"/><circle cx="712.4" cy="206.8" r="3.0" fill="#0a0ae6"/><circle cx="723.1" cy="199.6" r="3.0" fill="#0a0ae6"/><circle cx="735.7" cy="202.8" r="3.0" fill="#0a0ae6"/><circle cx="745.0" cy="199.3" r="3.0" fill="#0a0ae6"/><circle cx="762.2" cy="193.3" r="3.0" fill="#0a0ae6"/><circle cx="778.3" cy="202.0" r="3.0" fill="#0a0ae6"/><circle cx="788.8" cy="202.9" r="3.0" fill="#0a0ae6"/><circle cx="808.0" cy="199.6" r="3.0" fill="#0a0ae6"/><circle cx="823.4" cy="211.5" r="3.0" fill="#0a0ae6"/><circle cx="832.8" cy="217.9" r="3.0" fill="#0a0ae6"/><circle cx="848.1" cy="220.0" r="3.0" fill="#0a0ae6"/><circle cx="856.8" cy="232.7" r="3.0" fill="#0a0ae6"/><circle cx="866.2" cy="234.7" r="3.0" fill="#0a0ae6"/><circle cx="887.0" cy="238.7" r="3.0" fill="#0a0ae6"/><circle cx="898.1" cy="256.7" r="3.0" fill="#0a0ae6"/><circle cx="907.7" cy="267.3" r="3.0" fill="#0a0ae6"/><circle cx="924.7" cy="278.6" r="3.0" fill="#0a0ae6"/><circle cx="927.8" cy="298.7" r="3.0" fill="#0a0ae6"/><circle cx="931.7" cy="308.2" r="3.0" fill="#0a0ae6"/><circle cx="945.6" cy="320.2" r="3.0" fill="#0a0ae6"/><circle cx="946.2" cy="338.5" r="3.0" fill="#0a0ae6"/><circle cx="950.0" cy="347.4" r="3.0" fill="#0a0ae6"/><circle cx="962.6" cy="360.9" r="3.0" fill="#0a0ae6"/><circle cx="961.1" cy="379.3" r="3.0" fill="#0a0ae6"/><circle cx="964.5" cy="390.2" r="3.0" fill="#0a0ae6"/><circle cx="974.5" cy="407.6" r="3.0" fill="#0a0ae6"/><circle cx="968.5" cy="426.6" r="3.0" fill="#0a0ae6"/><circle cx="968.5" cy="439.0" r="3.0" fill="#0a0ae6"/><circle cx="973.8" cy="458.7" r="3.0" fill="#0a0ae6"/><circle cx="962.8" cy="476.0" r="3.0" fill="#0a0ae6"/><circle cx="957.0" cy="486.8" r="3.0" fill="#0a0ae6"/><circle cx="956.0" cy="503.3" r="3.0" fill="#0a0ae6"/><circle cx="943.1" cy="513.7" r="3.0" fill="#0a0ae6"/><circle cx="939.0" cy="523.3" r="3.0" fill="#0a0ae6"/><circle cx="934.1" cy="542.1" r="3.0" fill="#0a0ae6"/><circle cx="916.9" cy="551.3" r="3.0" fill="#0a0ae6"/><circle cx="910.2" cy="558.5" r="3.0" fill="#0a0ae6"/><circle cx="903.8" cy="576.2" r="3.0" fill="#0a0ae6"/><circle cx="886.4" cy="583.4" r="3.0" fill="#0a0ae6"/><circle cx="878.4" cy="591.2" r="3.0" fill="#0a0ae6"/><circle cx="868.0" cy="608.3" r="3.0" fill="#0a0ae6"/><circle cx="848.3" cy="612.2" r="3.0" fill="#0a0ae6"/><circle cx="841.1" cy="618.9" r="3.0" fill="#0a0ae6"/><circle cx="829.5" cy="637.8" r="3.0" fill="#0a0ae6"/><circle cx="807.7" cy="642.1" r="3.0" fill="#0a0ae6"/><circle cx="792.4" cy="644.7" r="3.0" fill="#0a0ae6"/><circle cx="776.8" cy="652.6" r="3.0" fill="#0a0ae6"/><circle cx="760.5" cy="646.4" r="3.0" fill="#0a0ae6"/><circle cx="753.0" cy="647.9" r="3.0" fill="#0a0ae6"/><circle cx="736.6" cy="657.5" r="3.0" fill="#0a0ae6"/><circle cx="718.5" cy="652.0" r="3.0" fill="#0a0ae6"/><circle cx="703.7" cy="649.4" r="3.0" fill="#0a0ae6"/><circle cx="684.7" cy="648.3" r="3.0" fill="#0a0ae6"/><circle cx="672.6" cy="633.6" r="3.0" fill="#0a0ae6"/><circle cx="664.7" cy="629.5" r="3.0" fill="#0a0ae6"/><circle cx="645.7" cy="628.3" r="3.0" fill="#0a0ae6"/><circle cx="633.7" cy="613.4" r="3.0" fill="#0a0ae6"/><circle cx="624.2" cy="607.2" r="3.0" fill="#0a0ae6"/><circle cx="605.5" cy="601.7" r="3.0" fill="#0a0ae6"/><circle cx="597.1" cy="584.2" r="3.0" fill="#0a0ae6"/><circle cx="589.7" cy="578.2" r="3.0" fill="#0a0ae6"/><circle cx="570.7" cy="571.7" r="3.0" fill="#0a0ae6"/><circle cx="562.6" cy="553.3" r="3.0" fill="#0a0ae6"/><circle cx="553.2" cy="541.9" r="3.0" fill="#0a0ae6"/><circle cx="537.1" cy="526.9" r="3.0" fill="#0a0ae6"/><circle cx="537.2" cy="504.9" r="3.0" fill="#0a0ae6"/><circle cx="535.7" cy="496.2" r="3.0" fill="#0a0ae6"/><circle cx="521.6" cy="484.5" r="3.0" fill="#0a0ae6"/><circle cx="520.7" cy="466.3" r="3.0" fill="#0a0ae6"/><circle cx="518.7" cy="451.9" r="3.0" fill="#0a0ae6"/><circle cx="514.2" cy="434.7" r="3.0" fill="#0a0ae6"/><circle cx="523.8" cy="419.7" r="3.0" fill="#0a0ae6"/><circle cx="524.8" cy="411.6" r="3.0" fill="#0a0ae6"/><circle cx="520.0" cy="394.0" r="3.0" fill="#0a0ae6"/><circle cx="529.8" cy="378.6" r="3.0" fill="#0a0ae6"/><circle cx="980.2" cy="409.0" r="3.0" fill="#0a0ae6"/><circle cx="976.6" cy="452.9" r="3.0" fill="#0a0ae6"/><circle cx="960.6" cy="494.9" r="3.0" fill="#0a0ae6"/><circle cx="945.7" cy="529.6" r="3.0" fill="#0a0ae6"/><circle cx="914.1" cy="561.8" r="3.0" fill="#0a0ae6"/><circle cx="875.3" cy="591.6" r="3.0" fill="#0a0ae6"/><circle cx="837.9" cy="215.8" r="3.0" fill="#0a0ae6"/><circle cx="878.4" cy="233.5" r="3.0" fill="#0a0ae6"/><circle cx="914.7" cy="259.7" r="3.0" fill="#0a0ae6"/><circle cx="939.3" cy="293.2" r="3.0" fill="#0a0ae6"/><circle cx="964.9" cy="329.9" r="3.0" fill="#0a0ae6"/><circle cx="976.2" cy="372.0" r="3.0" fill="#0a0ae6"/><circle cx="993.0" cy="414.4" r="3.0" fill="#0a0ae6"/><circle cx="1000.4" cy="432.7" r="3.0" fill="#0a0ae6"/><circle cx="990.1" cy="449.6" r="3.0" fill="#0a0ae6"/><circle cx="987.6" cy="461.9" r="3.0" fill="#0a0ae6"/><circle cx="989.6" cy="481.9" r="3.0" fill="#0a0ae6"/><circle cx="974.8" cy="495.5" r="3.0" fill="#0a0ae6"/><circle cx="969.5" cy="502.8" r="3.0" fill="#0a0ae6"/><circle cx="970.5" cy="519.7" r="3.0" fill="#0a0ae6"/><circle cx="957.6" cy="530.6" r="3.0" fill="#0a0ae6"/><circle cx="952.2" cy="542.2" r="3.0" fill="#0a0ae6"/><circle cx="946.0" cy="561.4" r="3.0" fill="#0a0ae6"/><circle cx="926.9" cy="568.0" r="3.0" fill="#0a0ae6"/><circle cx="919.0" cy="576.2" r="3.0" fill="#0a0ae6"/><circle cx="909.3" cy="595.7" r="3.0" fill="#0a0ae6"/><circle cx="887.9" cy="600.1" r="3.0" fill="#0a0ae6"/><circle cx="819.4" cy="189.8" r="3.0" fill="#0a0ae6"/><circle cx="835.7" cy="201.7" r="3.0" fill="#0a0ae6"/><circle cx="847.3" cy="205.5" r="3.0" fill="#0a0ae6"/><circle cx="867.0" cy="204.5" r="3.0" fill="#0a0ae6"/><circle cx="879.6" cy="219.6" r="3.0" fill="#0a0ae6"/><circle cx="889.9" cy="225.2" r="3.0" fill="#0a0ae6"/><circle cx="909.6" cy="228.4" r="3.0" fill="#0a0ae6"/><circle cx="919.0" cy="246.2" r="3.0" fill="#0a0ae6"/><circle cx="927.2" cy="255.7" r="3.0" fill="#0a0ae6"/><circle cx="943.8" cy="264.2" r="3.0" fill="#0a0ae6"/><circle cx="946.9" cy="282.5" r="3.0" fill="#0a0ae6"/><circle cx="952.9" cy="289.2" r="3.0" fill="#0a0ae6"/><circle cx="970.4" cy="298.8" r="3.0" fill="#0a0ae6"/><circle cx="973.3" cy="318.6" r="3.0" fill="#0a0ae6"/><circle cx="978.6" cy="330.7" r="3.0" fill="#0a0ae6"/><circle cx="991.6" cy="345.3" r="3.0" fill="#0a0ae6"/><circle cx="987.7" cy="364.4" r="3.0" fill="#0a0ae6"/><circle cx="987.7" cy="374.5" r="3.0" fill="#0a0ae6"/><circle cx="996.7" cy="388.5" r="3.0" fill="#0a0ae6"/><circle cx="990.9" cy="404.1" r="3.0" fill="#0a0ae6"/><circle cx="442.0" cy="475.0" r="3.0" fill="#0a0ae6"/><circle cx="457.0" cy="466.0" r="3.0" fill="#0a0ae6"/><circle cx="495.0" cy="459.0" r="3.0" fill="#0a0ae6"/><circle cx="530.0" cy="458.0" r="3.0" fill="#0a0ae6"/><circle cx="523.0" cy="492.0" r="3.0" fill="#0a0ae6"/><circle cx="499.0" cy="494.0" r="3.0" fill="#0a0ae6"/><circle cx="478.0" cy="529.0" r="3.0" fill="#0a0ae6"/><circle cx="439.0" cy="576.0" r="3.0" fill="#0a0ae6"/><circle cx="447.0" cy="622.0" r="3.0" fill="#0a0ae6"/><circle cx="477.0" cy="621.0" r="3.0" fill="#0a0ae6"/><circle cx="482.0" cy="624.0" r="3.0" fill="#0a0ae6"/><circle cx="425.0" cy="629.0" r="3.0" fill="#0a0ae6"/><circle cx="498.0" cy="634.0" r="3.0" fill="#0a0ae6"/><circle cx="406.0" cy="664.0" r="3.0" fill="#0a0ae6"/><circle cx="392.0" cy="696.0" r="3.0" fill="#0a0ae6"/><circle cx="395.0" cy="705.0" r="3.0" fill="#0a0ae6"/><circle cx="413.0" cy="740.0" r="3.0" fill="#0a0ae6"/><circle cx="433.0" cy="753.0" r="3.0" fill="#0a0ae6"/><circle cx="451.0" cy="759.0" r="3.0" fill="#0a0ae6"/><circle cx="464.0" cy="757.0" r="3.0" fill="#0a0ae6"/><circle cx="487.0" cy="755.0" r="3.0" fill="#0a0ae6"/><circle cx="497.0" cy="755.0" r="3.0" fill="#0a0ae6"/><circle cx="521.0" cy="721.0" r="3.0" fill="#0a0ae6"/><circle cx="509.0" cy="669.0" r="3.0" fill="#0a0ae6"/><circle cx="472.0" cy="663.0" r="3.0" fill="#0a0ae6"/><circle cx="484.0" cy="642.0" r="3.0" fill="#0a0ae6"/><circle cx="446.0" cy="642.0" r="3.0" fill="#0a0ae6"/><circle cx="433.0" cy="643.0" r="3.0" fill="#0a0ae6"/><circle cx="427.0" cy="641.0" r="3.0" fill="#0a0ae6"/><circle cx="426.0" cy="656.0" r="3.0" fill="#0a0ae6"/><circle cx="434.0" cy="687.0" r="3.0" fill="#0a0ae6"/><circle cx="446.0" cy="687.0" r="3.0" fill="#0a0ae6"/><circle cx="463.0" cy="685.0" r="3.0" fill="#0a0ae6"/><circle cx="466.0" cy="689.0" r="3.0" fill="#0a0ae6"/><circle cx="485.0" cy="688.0" r="3.0" fill="#0a0ae6"/><circle cx="482.0" cy="702.0" r="3.0" fill="#0a0ae6"/><circle cx="489.0" cy="726.0" r="3.0" fill="#0a0ae6"/><circle cx="468.0" cy="724.0" r="3.0" fill="#0a0ae6"/><circle cx="442.0" cy="725.0" r="3.0" fill="#0a0ae6"/><circle cx="430.0" cy="729.0" r="3.0" fill="#0a0ae6"/><circle cx="1072.0" cy="460.0" r="3.0" fill="#0a0ae6"/><circle cx="1115.0" cy="491.0" r="3.0" fill="#0a0ae6"/><circle cx="1112.0" cy="588.0" r="3.0" fill="#0a0ae6"/><circle cx="1074.0" cy="535.0" r="3.0" fill="#0a0ae6"/><circle cx="1055.0" cy="496.0" r="3.0" fill="#0a0ae6"/><circle cx="1027.0" cy="491.0" r="3.0" fill="#0a0ae6"/><circle cx="1049.0" cy="624.0" r="3.0" fill="#0a0ae6"/><circle cx="1074.0" cy="624.0" r="3.0" fill="#0a0ae6"/><circle cx="1112.0" cy="635.0" r="3.0" fill="#0a0ae6"/><circle cx="1066.0" cy="639.0" r="3.0" fill="#0a0ae6"/><circle cx="1098.0" cy="657.0" r="3.0" fill="#0a0ae6"/><circle cx="1123.0" cy="662.0" r="3.0" fill="#0a0ae6"/><circle cx="1113.0" cy="664.0" r="3.0" fill="#0a0ae6"/><circle cx="1022.0" cy="666.0" r="3.0" fill="#0a0ae6"/><circle cx="1009.0" cy="708.0" r="3.0" fill="#0a0ae6"/><circle cx="1023.0" cy="728.0" r="3.0" fill="#0a0ae6"/><circle cx="1023.0" cy="735.0" r="3.0" fill="#0a0ae6"/><circle cx="1041.0" cy="752.0" r="3.0" fill="#0a0ae6"/><circle cx="1061.0" cy="764.0" r="3.0" fill="#0a0ae6"/><circle cx="1071.0" cy="764.0" r="3.0" fill="#0a0ae6"/><circle cx="1107.0" cy="759.0" r="3.0" fill="#0a0ae6"/><circle cx="1110.0" cy="758.0" r="3.0" fill="#0a0ae6"/><circle cx="1133.0" cy="723.0" r="3.0" fill="#0a0ae6"/><circle cx="1130.0" cy="690.0" r="3.0" fill="#0a0ae6"/><circle cx="1091.0" cy="676.0" r="3.0" fill="#0a0ae6"/><circle cx="1038.0" cy="677.0" r="3.0" fill="#0a0ae6"/><circle cx="1046.0" cy="702.0" r="3.0" fill="#0a0ae6"/><circle cx="1061.0" cy="714.0" r="3.0" fill="#0a0ae6"/><circle cx="1085.0" cy="722.0" r="3.0" fill="#0a0ae6"/><circle cx="1104.0" cy="717.0" r="3.0" fill="#0a0ae6"/><circle cx="1055.0" cy="726.0" r="3.0" fill="#0a0ae6"/><circle cx="1053.0" cy="741.0" r="3.0" fill="#0a0ae6"/><circle cx="1081.0" cy="750.0" r="3.0" fill="#0a0ae6"/><circle cx="1110.0" cy="745.0" r="3.0" fill="#0a0ae6"/><circle cx="968.0" cy="448.0" r="3.0" fill="#0a0ae6"/><circle cx="972.0" cy="456.0" r="3.0" fill="#0a0ae6"/><circle cx="979.0" cy="463.0" r="3.0" fill="#0a0ae6"/><circle cx="985.0" cy="458.0" r="3.0" fill="#0a0ae6"/><circle cx="950.0" cy="470.0" r="3.0" fill="#0a0ae6"/><circle cx="962.0" cy="485.0" r="3.0" fill="#0a0ae6"/><circle cx="987.0" cy="490.0" r="3.0" fill="#0a0ae6"/><circle cx="992.0" cy="495.0" r="3.0" fill="#0a0ae6"/><circle cx="1027.0" cy="491.0" r="3.0" fill="#0a0ae6"/><circle cx="966.0" cy="464.0" r="3.0" fill="#0a0ae6"/><circle cx="990.0" cy="476.0" r="3.0" fill="#0a0ae6"/><circle cx="692.0" cy="735.0" r="3.0" fill="#0a0ae6"/><circle cx="692.0" cy="818.0" r="3.0" fill="#0a0ae6"/><circle cx="690.0" cy="778.0" r="3.0" fill="#0a0ae6"/><circle cx="724.0" cy="794.0" r="3.0" fill="#0a0ae6"/><circle cx="691.0" cy="837.0" r="3.0" fill="#0a0ae6"/><circle cx="689.0" cy="854.0" r="3.0" fill="#0a0ae6"/><circle cx="714.0" cy="718.0" r="3.0" fill="#0a0ae6"/><circle cx="792.0" cy="782.0" r="3.0" fill="#0a0ae6"/><circle cx="790.0" cy="842.0" r="3.0" fill="#0a0ae6"/><circle cx="821.0" cy="799.0" r="3.0" fill="#0a0ae6"/><circle cx="781.0" cy="871.0" r="3.0" fill="#0a0ae6"/><circle cx="833.0" cy="868.0" r="3.0" fill="#0a0ae6"/><circle cx="780.0" cy="882.0" r="3.0" fill="#0a0ae6"/><circle cx="822.0" cy="883.0" r="3.0" fill="#0a0ae6"/><circle cx="831.0" cy="887.0" r="3.0" fill="#0a0ae6"/><circle cx="841.0" cy="896.0" r="3.0" fill="#0a0ae6"/><circle cx="692.0" cy="636.0" r="3.0" fill="#0a0ae6"/><circle cx="733.0" cy="640.0" r="3.0" fill="#0a0ae6"/><circle cx="792.0" cy="646.0" r="3.0" fill="#0a0ae6"/><circle cx="838.0" cy="640.0" r="3.0" fill="#0a0ae6"/><circle cx="733.0" cy="690.0" r="3.0" fill="#0a0ae6"/><circle cx="838.0" cy="700.0" r="3.0" fill="#0a0ae6"/><circle cx="693.0" cy="700.0" r="3.0" fill="#0a0ae6"/><circle cx="791.0" cy="705.0" r="3.0" fill="#0a0ae6"/><circle cx="595.0" cy="848.0" r="3.0" fill="#0a0ae6"/><circle cx="630.0" cy="852.0" r="3.0" fill="#0a0ae6"/><circle cx="649.0" cy="879.0" r="3.0" fill="#0a0ae6"/><circle cx="590.0" cy="891.0" r="3.0" fill="#0a0ae6"/><circle cx="602.0" cy="928.0" r="3.0" fill="#0a0ae6"/><circle cx="651.0" cy="936.0" r="3.0" fill="#0a0ae6"/><circle cx="699.0" cy="936.0" r="3.0" fill="#0a0ae6"/><circle cx="718.0" cy="935.0" r="3.0" fill="#0a0ae6"/><circle cx="752.0" cy="933.0" r="3.0" fill="#0a0ae6"/><circle cx="749.0" cy="945.0" r="3.0" fill="#0a0ae6"/><circle cx="818.0" cy="944.0" r="3.0" fill="#0a0ae6"/><circle cx="854.0" cy="942.0" r="3.0" fill="#0a0ae6"/><circle cx="852.0" cy="919.0" r="3.0" fill="#0a0ae6"/><circle cx="750.0" cy="911.0" r="3.0" fill="#0a0ae6"/><circle cx="728.0" cy="859.0" r="3.0" fill="#0a0ae6"/><circle cx="732.0" cy="862.0" r="3.0" fill="#0a0ae6"/><circle cx="722.0" cy="876.0" r="3.0" fill="#0a0ae6"/><circle cx="730.0" cy="880.0" r="3.0" fill="#0a0ae6"/><circle cx="729.0" cy="886.0" r="3.0" fill="#0a0ae6"/><circle cx="739.0" cy="889.0" r="3.0" fill="#0a0ae6"/><circle cx="747.0" cy="886.0" r="3.0" fill="#0a0ae6"/><circle cx="682.0" cy="864.0" r="3.0" fill="#0a0ae6"/><circle cx="682.0" cy="875.0" r="3.0" fill="#0a0ae6"/><circle cx="682.0" cy="886.0" r="3.0" fill="#0a0ae6"/><circle cx="698.0" cy="888.0" r="3.0" fill="#0a0ae6"/><circle cx="702.0" cy="565.0" r="3.0" fill="#0a0ae6"/><circle cx="806.0" cy="604.0" r="3.0" fill="#0a0ae6"/><circle cx="834.0" cy="590.0" r="3.0" fill="#0a0ae6"/><circle cx="853.0" cy="534.0" r="3.0" fill="#0a0ae6"/><circle cx="848.0" cy="437.0" r="3.0" fill="#0a0ae6"/><circle cx="870.0" cy="519.0" r="3.0" fill="#0a0ae6"/><circle cx="824.0" cy="469.0" r="3.0" fill="#0a0ae6"/><circle cx="820.0" cy="470.0" r="3.0" fill="#0a0ae6"/><circle cx="836.0" cy="511.0" r="3.0" fill="#0a0ae6"/><circle cx="840.0" cy="530.0" r="3.0" fill="#0a0ae6"/><circle cx="745.0" cy="494.0" r="3.0" fill="#0a0ae6"/><circle cx="787.0" cy="487.0" r="3.0" fill="#0a0ae6"/><circle cx="610.0" cy="485.0" r="3.0" fill="#0a0ae6"/><circle cx="617.0" cy="474.0" r="3.0" fill="#0a0ae6"/><circle cx="613.0" cy="530.0" r="3.0" fill="#0a0ae6"/><circle cx="641.0" cy="579.0" r="3.0" fill="#0a0ae6"/><circle cx="658.0" cy="589.0" r="3.0" fill="#0a0ae6"/><circle cx="690.0" cy="601.0" r="3.0" fill="#0a0ae6"/><circle cx="676.0" cy="596.0" r="3.0" fill="#0a0ae6"/><circle cx="623.0" cy="413.0" r="3.0" fill="#0a0ae6"/><circle cx="623.0" cy="423.0" r="3.0" fill="#0a0ae6"/><circle cx="660.0" cy="392.0" r="3.0" fill="#0a0ae6"/><circle cx="694.0" cy="411.0" r="3.0" fill="#0a0ae6"/><circle cx="736.0" cy="451.0" r="3.0" fill="#0a0ae6"/><circle cx="706.0" cy="461.0" r="3.0" fill="#0a0ae6"/><circle cx="656.0" cy="459.0" r="3.0" fill="#0a0ae6"/><circle cx="707.0" cy="324.0" r="3.0" fill="#0a0ae6"/><circle cx="602.0" cy="331.0" r="3.0" fill="#0a0ae6"/><circle cx="650.0" cy="273.0" r="3.0" fill="#0a0ae6"/><circle cx="838.0" cy="302.0" r="3.0" fill="#0a0ae6"/><circle cx="833.0" cy="407.0" r="3.0" fill="#0a0ae6"/><circle cx="761.0" cy="418.0" r="3.0" fill="#0a0ae6"/><circle cx="740.0" cy="342.0" r="3.0" fill="#0a0ae6"/><circle cx="739.0" cy="432.0" r="3.0" fill="#0a0ae6"/><circle cx="668.8" cy="388.8" r="3.0" fill="#0a0ae6"/><circle cx="882.0" cy="285.0" r="3.0" fill="#0a0ae6"/><circle cx="891.0" cy="297.0" r="3.0" fill="#0a0ae6"/><circle cx="869.0" cy="300.0" r="3.0" fill="#0a0ae6"/><circle cx="880.0" cy="309.0" r="3.0" fill="#0a0ae6"/><circle cx="570.0" cy="396.0" r="3.0" fill="#0a0ae6"/><circle cx="587.0" cy="396.0" r="3.0" fill="#0a0ae6"/><circle cx="578.0" cy="388.0" r="3.0" fill="#0a0ae6"/><circle cx="578.0" cy="403.8" r="3.0" fill="#0a0ae6"/><circle cx="582.0" cy="424.8" r="3.0" fill="#0a0ae6"/><circle cx="565.0" cy="443.0" r="3.0" fill="#0a0ae6"/><circle cx="601.0" cy="442.0" r="3.0" fill="#0a0ae6"/><circle cx="583.0" cy="459.0" r="3.0" fill="#0a0ae6"/><circle cx="876.0" cy="474.0" r="3.0" fill="#0a0ae6"/><circle cx="907.0" cy="474.0" r="3.0" fill="#0a0ae6"/><circle cx="893.0" cy="457.0" r="3.0" fill="#0a0ae6"/><circle cx="893.0" cy="491.0" r="3.0" fill="#0a0ae6"/><circle cx="600.0" cy="283.0" r="3.0" fill="#0a0ae6"/><circle cx="597.0" cy="264.0" r="3.0" fill="#0a0ae6"/><circle cx="607.0" cy="256.0" r="3.0" fill="#0a0ae6"/><circle cx="636.0" cy="239.0" r="3.0" fill="#0a0ae6"/><circle cx="656.0" cy="235.0" r="3.0" fill="#0a0ae6"/><circle cx="659.0" cy="242.0" r="3.0" fill="#0a0ae6"/><circle cx="662.0" cy="242.0" r="3.0" fill="#0a0ae6"/><circle cx="687.0" cy="254.0" r="3.0" fill="#0a0ae6"/><circle cx="629.0" cy="261.0" r="3.0" fill="#0a0ae6"/><circle cx="623.0" cy="269.0" r="3.0" fill="#0a0ae6"/><circle cx="619.0" cy="270.0" r="3.0" fill="#0a0ae6"/><circle cx="616.0" cy="261.0" r="3.0" fill="#0a0ae6"/><circle cx="605.0" cy="273.0" r="3.0" fill="#0a0ae6"/><circle cx="598.0" cy="280.0" r="3.0" fill="#0a0ae6"/><circle cx="592.0" cy="277.0" r="3.0" fill="#0a0ae6"/><circle cx="677.0" cy="222.0" r="3.0" fill="#0a0ae6"/><circle cx="694.0" cy="217.0" r="3.0" fill="#0a0ae6"/><circle cx="689.0" cy="225.0" r="3.0" fill="#0a0ae6"/><circle cx="657.0" cy="215.0" r="3.0" fill="#0a0ae6"/><circle cx="664.0" cy="222.0" r="3.0" fill="#0a0ae6"/><circle cx="753.0" cy="245.0" r="3.0" fill="#0a0ae6"/><circle cx="762.0" cy="258.0" r="3.0" fill="#0a0ae6"/><circle cx="795.0" cy="256.0" r="3.0" fill="#0a0ae6"/><circle cx="818.0" cy="267.0" r="3.0" fill="#0a0ae6"/><circle cx="843.0" cy="281.0" r="3.0" fill="#0a0ae6"/><circle cx="852.0" cy="262.0" r="3.0" fill="#0a0ae6"/><circle cx="829.0" cy="243.0" r="3.0" fill="#0a0ae6"/><circle cx="772.0" cy="231.0" r="3.0" fill="#0a0ae6"/><circle cx="799.0" cy="232.0" r="3.0" fill="#0a0ae6"/><circle cx="772.0" cy="213.0" r="3.0" fill="#0a0ae6"/><circle cx="780.0" cy="212.0" r="3.0" fill="#0a0ae6"/><circle cx="776.0" cy="218.0" r="3.0" fill="#0a0ae6"/><circle cx="566.9" cy="333.8" r="3.0" fill="#0a0ae6"/><circle cx="561.9" cy="346.9" r="3.0" fill="#0a0ae6"/><circle cx="576.9" cy="346.0" r="3.0" fill="#0a0ae6"/><circle cx="552.9" cy="360.0" r="3.0" fill="#0a0ae6"/><circle cx="552.9" cy="374.0" r="3.0" fill="#0a0ae6"/><circle cx="562.5" cy="383.8" r="3.0" fill="#0a0ae6"/><circle cx="565.0" cy="386.0" r="3.0" fill="#0a0ae6"/><circle cx="561.0" cy="388.0" r="3.0" fill="#0a0ae6"/><circle cx="547.0" cy="395.0" r="3.0" fill="#0a0ae6"/><circle cx="543.0" cy="405.0" r="3.0" fill="#0a0ae6"/><circle cx="543.8" cy="416.0" r="3.0" fill="#0a0ae6"/><circle cx="562.0" cy="418.0" r="3.0" fill="#0a0ae6"/><circle cx="555.0" cy="427.0" r="3.0" fill="#0a0ae6"/><circle cx="559.8" cy="432.0" r="3.0" fill="#0a0ae6"/><circle cx="547.0" cy="443.0" r="3.0" fill="#0a0ae6"/><circle cx="554.0" cy="484.0" r="3.0" fill="#0a0ae6"/><circle cx="541.0" cy="490.0" r="3.0" fill="#0a0ae6"/><circle cx="555.0" cy="503.0" r="3.0" fill="#0a0ae6"/><circle cx="573.0" cy="512.0" r="3.0" fill="#0a0ae6"/><circle cx="581.0" cy="509.0" r="3.0" fill="#0a0ae6"/><circle cx="584.0" cy="513.0" r="3.0" fill="#0a0ae6"/><circle cx="578.0" cy="529.0" r="3.0" fill="#0a0ae6"/><circle cx="549.0" cy="470.0" r="3.0" fill="#0a0ae6"/><circle cx="558.0" cy="457.0" r="3.0" fill="#0a0ae6"/><circle cx="545.0" cy="462.0" r="3.0" fill="#0a0ae6"/><circle cx="524.0" cy="470.0" r="3.0" fill="#0a0ae6"/><circle cx="526.0" cy="496.0" r="3.0" fill="#0a0ae6"/><circle cx="533.0" cy="495.0" r="3.0" fill="#0a0ae6"/><circle cx="548.0" cy="497.0" r="3.0" fill="#0a0ae6"/><circle cx="584.0" cy="545.0" r="3.0" fill="#0a0ae6"/><circle cx="596.0" cy="547.0" r="3.0" fill="#0a0ae6"/><circle cx="611.0" cy="541.0" r="3.0" fill="#0a0ae6"/><circle cx="613.0" cy="548.0" r="3.0" fill="#0a0ae6"/><circle cx="609.0" cy="561.0" r="3.0" fill="#0a0ae6"/><circle cx="611.0" cy="575.0" r="3.0" fill="#0a0ae6"/><circle cx="626.0" cy="583.0" r="3.0" fill="#0a0ae6"/><circle cx="638.0" cy="594.0" r="3.0" fill="#0a0ae6"/><circle cx="648.0" cy="607.0" r="3.0" fill="#0a0ae6"/><circle cx="664.0" cy="607.0" r="3.0" fill="#0a0ae6"/><circle cx="671.0" cy="600.0" r="3.0" fill="#0a0ae6"/><circle cx="678.0" cy="603.0" r="3.0" fill="#0a0ae6"/><circle cx="679.0" cy="617.0" r="3.0" fill="#0a0ae6"/><circle cx="686.0" cy="630.0" r="3.0" fill="#0a0ae6"/><circle cx="699.0" cy="622.0" r="3.0" fill="#0a0ae6"/><circle cx="701.0" cy="633.0" r="3.0" fill="#0a0ae6"/><circle cx="718.0" cy="621.0" r="3.0" fill="#0a0ae6"/><circle cx="720.0" cy="626.0" r="3.0" fill="#0a0ae6"/><circle cx="727.0" cy="632.0" r="3.0" fill="#0a0ae6"/><circle cx="746.0" cy="632.0" r="3.0" fill="#0a0ae6"/><circle cx="758.0" cy="628.0" r="3.0" fill="#0a0ae6"/><circle cx="764.0" cy="630.0" r="3.0" fill="#0a0ae6"/><circle cx="771.0" cy="634.0" r="3.0" fill="#0a0ae6"/><circle cx="801.0" cy="629.0" r="3.0" fill="#0a0ae6"/><circle cx="823.0" cy="630.0" r="3.0" fill="#0a0ae6"/><circle cx="829.0" cy="642.0" r="3.0" fill="#0a0ae6"/><circle cx="838.0" cy="606.0" r="3.0" fill="#0a0ae6"/><circle cx="845.0" cy="598.0" r="3.0" fill="#0a0ae6"/><circle cx="842.0" cy="614.0" r="3.0" fill="#0a0ae6"/><circle cx="802.0" cy="634.0" r="3.0" fill="#0a0ae6"/><circle cx="807.0" cy="634.0" r="3.0" fill="#0a0ae6"/><circle cx="817.0" cy="633.0" r="3.0" fill="#0a0ae6"/><circle cx="806.0" cy="643.0" r="3.0" fill="#0a0ae6"/><circle cx="730.0" cy="640.0" r="3.0" fill="#0a0ae6"/><circle cx="720.0" cy="645.0" r="3.0" fill="#0a0ae6"/><circle cx="563.0" cy="291.0" r="3.0" fill="#f40606"/><circle cx="563.0" cy="565.0" r="3.0" fill="#f40606"/><circle cx="985.0" cy="291.0" r="3.0" fill="#f40606"/><circle cx="985.0" cy="566.0" r="3.0" fill="#f40606"/><circle cx="550.0" cy="342.0" r="3.0" fill="#f40606"/><circle cx="573.8" cy="392.0" r="3.0" fill="#f40606"/><circle cx="572.9" cy="432.9" r="3.0" fill="#f40606"/><circle cx="540.0" cy="398.0" r="3.0" fill="#f40606"/><circle cx="624.0" cy="240.0" r="3.0" fill="#f40606"/><circle cx="645.0" cy="231.0" r="3.0" fill="#f40606"/><circle cx="655.0" cy="238.0" r="3.0" fill="#f40606"/><circle cx="668.0" cy="244.0" r="3.0" fill="#f40606"/><circle cx="671.0" cy="222.0" r="3.0" fill="#f40606"/><circle cx="676.0" cy="236.0" r="3.0" fill="#f40606"/><circle cx="682.0" cy="246.0" r="3.0" fill="#f40606"/><circle cx="688.0" cy="238.0" r="3.0" fill="#f40606"/><circle cx="696.0" cy="242.0" r="3.0" fill="#f40606"/><circle cx="703.0" cy="248.0" r="3.0" fill="#f40606"/><circle cx="719.0" cy="248.0" r="3.0" fill="#f40606"/><circle cx="612.0" cy="261.0" r="3.0" fill="#f40606"/><circle cx="616.0" cy="281.0" r="3.0" fill="#f40606"/><circle cx="604.0" cy="273.0" r="3.0" fill="#f40606"/><circle cx="693.0" cy="216.0" r="3.0" fill="#f40606"/><circle cx="680.0" cy="213.0" r="3.0" fill="#f40606"/><circle cx="684.0" cy="205.0" r="3.0" fill="#f40606"/><circle cx="626.0" cy="232.0" r="3.0" fill="#f40606"/><circle cx="640.0" cy="288.0" r="3.0" fill="#f40606"/><circle cx="644.0" cy="292.0" r="3.0" fill="#f40606"/><circle cx="680.0" cy="294.0" r="3.0" fill="#f40606"/><circle cx="628.0" cy="313.0" r="3.0" fill="#f40606"/><circle cx="617.0" cy="315.0" r="3.0" fill="#f40606"/><circle cx="627.8" cy="342.9" r="3.0" fill="#f40606"/><circle cx="628.8" cy="351.9" r="3.0" fill="#f40606"/><circle cx="637.9" cy="353.8" r="3.0" fill="#f40606"/><circle cx="664.0" cy="361.9" r="3.0" fill="#f40606"/><circle cx="610.9" cy="375.0" r="3.0" fill="#f40606"/><circle cx="686.9" cy="370.0" r="3.0" fill="#f40606"/><circle cx="691.9" cy="371.9" r="3.0" fill="#f40606"/><circle cx="688.8" cy="390.0" r="3.0" fill="#f40606"/><circle cx="631.9" cy="366.0" r="3.0" fill="#f40606"/><circle cx="722.9" cy="327.9" r="3.0" fill="#f40606"/><circle cx="736.0" cy="379.0" r="3.0" fill="#f40606"/><circle cx="731.0" cy="378.8" r="3.0" fill="#f40606"/><circle cx="756.0" cy="308.0" r="3.0" fill="#f40606"/><circle cx="749.0" cy="368.0" r="3.0" fill="#f40606"/><circle cx="781.0" cy="280.0" r="3.0" fill="#f40606"/><circle cx="782.0" cy="296.0" r="3.0" fill="#f40606"/><circle cx="784.0" cy="312.0" r="3.0" fill="#f40606"/><circle cx="818.0" cy="286.0" r="3.0" fill="#f40606"/><circle cx="828.0" cy="286.0" r="3.0" fill="#f40606"/><circle cx="808.0" cy="351.0" r="3.0" fill="#f40606"/><circle cx="831.0" cy="365.0" r="3.0" fill="#f40606"/><circle cx="769.0" cy="354.0" r="3.0" fill="#f40606"/><circle cx="774.0" cy="364.0" r="3.0" fill="#f40606"/><circle cx="772.0" cy="377.0" r="3.0" fill="#f40606"/><circle cx="805.0" cy="374.0" r="3.0" fill="#f40606"/><circle cx="795.0" cy="406.0" r="3.0" fill="#f40606"/><circle cx="808.0" cy="414.0" r="3.0" fill="#f40606"/><circle cx="770.0" cy="425.0" r="3.0" fill="#f40606"/><circle cx="786.0" cy="435.0" r="3.0" fill="#f40606"/><circle cx="752.0" cy="247.0" r="3.0" fill="#f40606"/><circle cx="774.0" cy="232.0" r="3.0" fill="#f40606"/><circle cx="793.0" cy="236.0" r="3.0" fill="#f40606"/><circle cx="800.0" cy="247.0" r="3.0" fill="#f40606"/><circle cx="817.0" cy="239.0" r="3.0" fill="#f40606"/><circle cx="826.0" cy="248.0" r="3.0" fill="#f40606"/><circle cx="834.0" cy="254.0" r="3.0" fill="#f40606"/><circle cx="845.0" cy="239.0" r="3.0" fill="#f40606"/><circle cx="851.0" cy="252.0" r="3.0" fill="#f40606"/><circle cx="838.0" cy="267.0" r="3.0" fill="#f40606"/><circle cx="846.0" cy="271.0" r="3.0" fill="#f40606"/><circle cx="854.0" cy="272.0" r="3.0" fill="#f40606"/><circle cx="757.0" cy="267.0" r="3.0" fill="#f40606"/><circle cx="762.0" cy="257.0" r="3.0" fill="#f40606"/><circle cx="803.0" cy="259.0" r="3.0" fill="#f40606"/><circle cx="809.0" cy="259.0" r="3.0" fill="#f40606"/><circle cx="838.0" cy="223.0" r="3.0" fill="#f40606"/><circle cx="832.0" cy="230.0" r="3.0" fill="#f40606"/><circle cx="820.0" cy="215.0" r="3.0" fill="#f40606"/><circle cx="795.0" cy="210.0" r="3.0" fill="#f40606"/><circle cx="812.0" cy="208.0" r="3.0" fill="#f40606"/><circle cx="803.0" cy="192.0" r="3.0" fill="#f40606"/><circle cx="813.0" cy="196.0" r="3.0" fill="#f40606"/><circle cx="864.0" cy="340.0" r="3.0" fill="#f40606"/><circle cx="867.0" cy="405.0" r="3.0" fill="#f40606"/><circle cx="921.0" cy="417.0" r="3.0" fill="#f40606"/><circle cx="944.0" cy="310.0" r="3.0" fill="#f40606"/><circle cx="956.0" cy="331.0" r="3.0" fill="#f40606"/><circle cx="906.0" cy="246.0" r="3.0" fill="#f40606"/><circle cx="886.0" cy="264.0" r="3.0" fill="#f40606"/><circle cx="899.0" cy="277.0" r="3.0" fill="#f40606"/><circle cx="893.0" cy="255.0" r="3.0" fill="#f40606"/><circle cx="876.0" cy="290.0" r="3.0" fill="#f40606"/><circle cx="912.0" cy="314.0" r="3.0" fill="#f40606"/><circle cx="927.0" cy="344.0" r="3.0" fill="#f40606"/><circle cx="940.0" cy="371.0" r="3.0" fill="#f40606"/><circle cx="948.0" cy="392.0" r="3.0" fill="#f40606"/><circle cx="930.0" cy="280.0" r="3.0" fill="#f40606"/><circle cx="936.0" cy="298.0" r="3.0" fill="#f40606"/><circle cx="950.0" cy="350.0" r="3.0" fill="#f40606"/><circle cx="958.0" cy="372.0" r="3.0" fill="#f40606"/><circle cx="963.0" cy="410.0" r="3.0" fill="#f40606"/><circle cx="965.0" cy="432.0" r="3.0" fill="#f40606"/><circle cx="638.0" cy="406.9" r="3.0" fill="#f40606"/><circle cx="656.9" cy="412.9" r="3.0" fill="#f40606"/><circle cx="643.8" cy="422.9" r="3.0" fill="#f40606"/><circle cx="668.8" cy="420.6" r="3.0" fill="#f40606"/><circle cx="631.0" cy="431.9" r="3.0" fill="#f40606"/><circle cx="701.0" cy="436.0" r="3.0" fill="#f40606"/><circle cx="630.0" cy="464.0" r="3.0" fill="#f40606"/><circle cx="665.0" cy="467.0" r="3.0" fill="#f40606"/><circle cx="668.0" cy="474.0" r="3.0" fill="#f40606"/><circle cx="674.0" cy="482.0" r="3.0" fill="#f40606"/><circle cx="710.0" cy="481.0" r="3.0" fill="#f40606"/><circle cx="716.0" cy="482.0" r="3.0" fill="#f40606"/><circle cx="752.0" cy="473.0" r="3.0" fill="#f40606"/><circle cx="760.0" cy="478.0" r="3.0" fill="#f40606"/><circle cx="797.0" cy="469.0" r="3.0" fill="#f40606"/><circle cx="843.0" cy="448.0" r="3.0" fill="#f40606"/><circle cx="884.0" cy="465.0" r="3.0" fill="#f40606"/><circle cx="626.0" cy="494.0" r="3.0" fill="#f40606"/><circle cx="664.0" cy="499.0" r="3.0" fill="#f40606"/><circle cx="659.0" cy="507.0" r="3.0" fill="#f40606"/><circle cx="648.0" cy="512.0" r="3.0" fill="#f40606"/><circle cx="669.0" cy="507.0" r="3.0" fill="#f40606"/><circle cx="690.0" cy="521.0" r="3.0" fill="#f40606"/><circle cx="708.0" cy="513.0" r="3.0" fill="#f40606"/><circle cx="724.0" cy="514.0" r="3.0" fill="#f40606"/><circle cx="731.0" cy="514.0" r="3.0" fill="#f40606"/><circle cx="751.0" cy="521.0" r="3.0" fill="#f40606"/><circle cx="761.0" cy="504.0" r="3.0" fill="#f40606"/><circle cx="768.0" cy="509.0" r="3.0" fill="#f40606"/><circle cx="793.0" cy="514.0" r="3.0" fill="#f40606"/><circle cx="806.0" cy="500.0" r="3.0" fill="#f40606"/><circle cx="840.0" cy="545.0" r="3.0" fill="#f40606"/><circle cx="912.0" cy="535.0" r="3.0" fill="#f40606"/><circle cx="925.0" cy="531.0" r="3.0" fill="#f40606"/><circle cx="890.0" cy="500.0" r="3.0" fill="#f40606"/><circle cx="673.0" cy="557.0" r="3.0" fill="#f40606"/><circle cx="627.0" cy="572.0" r="3.0" fill="#f40606"/><circle cx="718.0" cy="574.0" r="3.0" fill="#f40606"/><circle cx="778.0" cy="556.0" r="3.0" fill="#f40606"/><circle cx="824.0" cy="572.0" r="3.0" fill="#f40606"/><circle cx="841.0" cy="597.0" r="3.0" fill="#f40606"/><circle cx="868.0" cy="596.0" r="3.0" fill="#f40606"/><circle cx="893.0" cy="578.0" r="3.0" fill="#f40606"/><circle cx="903.0" cy="565.0" r="3.0" fill="#f40606"/><circle cx="878.0" cy="565.0" r="3.0" fill="#f40606"/><circle cx="710.0" cy="609.0" r="3.0" fill="#f40606"/><circle cx="738.0" cy="615.0" r="3.0" fill="#f40606"/><circle cx="941.0" cy="472.0" r="3.0" fill="#f40606"/><circle cx="958.0" cy="499.0" r="3.0" fill="#f40606"/><circle cx="927.0" cy="500.0" r="3.0" fill="#f40606"/><circle cx="944.0" cy="500.0" r="3.0" fill="#f40606"/><circle cx="932.0" cy="520.0" r="3.0" fill="#f40606"/><circle cx="895.0" cy="538.0" r="3.0" fill="#f40606"/><circle cx="914.0" cy="538.0" r="3.0" fill="#f40606"/><circle cx="832.0" cy="538.0" r="3.0" fill="#f40606"/><circle cx="696.0" cy="628.0" r="3.0" fill="#f40606"/><circle cx="702.0" cy="626.0" r="3.0" fill="#f40606"/><circle cx="737.0" cy="640.0" r="3.0" fill="#f40606"/><circle cx="738.0" cy="632.0" r="3.0" fill="#f40606"/><circle cx="755.0" cy="623.0" r="3.0" fill="#f40606"/><circle cx="784.0" cy="615.0" r="3.0" fill="#f40606"/><circle cx="790.0" cy="637.0" r="3.0" fill="#f40606"/><circle cx="782.0" cy="640.0" r="3.0" fill="#f40606"/><circle cx="746.0" cy="656.0" r="3.0" fill="#f40606"/><circle cx="801.0" cy="622.0" r="3.0" fill="#f40606"/><circle cx="851.0" cy="624.0" r="3.0" fill="#f40606"/><circle cx="930.0" cy="502.0" r="3.0" fill="#f40606"/><circle cx="900.0" cy="537.0" r="3.0" fill="#f40606"/><circle cx="932.0" cy="461.0" r="3.0" fill="#f40606"/><circle cx="946.0" cy="452.0" r="3.0" fill="#f40606"/><circle cx="885.0" cy="464.0" r="3.0" fill="#f40606"/><circle cx="883.0" cy="596.0" r="3.0" fill="#f40606"/><circle cx="874.0" cy="616.0" r="3.0" fill="#f40606"/><circle cx="912.0" cy="551.0" r="3.0" fill="#f40606"/><circle cx="937.0" cy="558.0" r="3.0" fill="#f40606"/><circle cx="931.0" cy="578.0" r="3.0" fill="#f40606"/><path d="M745.5 214L739 614" stroke="#0808e8" stroke-width="4.400"/><path d="M614 464L457 481.5" stroke="#0808e8" stroke-width="4.400"/><path d="M456.5 482L452.5 718" stroke="#0808e8" stroke-width="4.400"/><path d="M906 460.5L1089 483" stroke="#0808e8" stroke-width="4.400"/><path d="M1089.5 483L1072 710" stroke="#0808e8" stroke-width="4.400"/><path d="M709.5 610L710 770" stroke="#0808e8" stroke-width="4.400"/><path d="M710 770L706 915" stroke="#0808e8" stroke-width="4.400"/><path d="M706 916L606 908.5" stroke="#0808e8" stroke-width="4.400"/><path d="M811.5 607L808 757" stroke="#0808e8" stroke-width="4.400"/><path d="M808 757L808 921" stroke="#0808e8" stroke-width="4.400"/><path d="M808 921.5L720 917" stroke="#0808e8" stroke-width="4.400"/><circle cx="709" cy="609.5" r="15" fill="none" stroke="#0a0acc" stroke-width="1.500"/><circle cx="709" cy="609.5" r="5.400" fill="#fcfc04"/><circle cx="738.5" cy="615.5" r="15" fill="none" stroke="#0a0acc" stroke-width="1.500"/><circle cx="738.5" cy="615.5" r="5.400" fill="#fcfc04"/><circle cx="811.5" cy="606.5" r="15" fill="none" stroke="#0a0acc" stroke-width="1.500"/><circle cx="811.5" cy="606.5" r="5.400" fill="#fcfc04"/><circle cx="746" cy="213.5" r="5" fill="#a9a9a9"/><circle cx="614.5" cy="464" r="5" fill="#a9a9a9"/><circle cx="457" cy="481.5" r="5" fill="#a9a9a9"/><circle cx="452" cy="719" r="5" fill="#a9a9a9"/><circle cx="905" cy="460" r="5" fill="#a9a9a9"/><circle cx="1090" cy="483" r="5" fill="#a9a9a9"/><circle cx="1072" cy="711" r="5" fill="#a9a9a9"/><circle cx="710" cy="770" r="5" fill="#a9a9a9"/><circle cx="706" cy="916" r="5" fill="#a9a9a9"/><circle cx="606" cy="908" r="5" fill="#a9a9a9"/><circle cx="808" cy="757" r="5" fill="#a9a9a9"/><circle cx="808" cy="921" r="5" fill="#a9a9a9"/><circle cx="720" cy="917" r="5" fill="#a9a9a9"/><path d="M945.600 624.600L956.400 628.400L952.600 630.800L969.800 648.200L968.800 649.200L951.200 632.200L949.200 636Z" fill="#050505"/></svg><span class="t" style="left:703.00px;top:93.54px;font:normal 18.67px/22px 'DejaVu Sans','Liberation Sans',sans-serif;color:#00008b;letter-spacing:-0.312px;">BoneBody_1</span><span class="t" style="left:572.00px;top:345.54px;font:normal 18.67px/22px 'DejaVu Sans','Liberation Sans',sans-serif;color:#00008b;letter-spacing:-0.174px;">BoneARmB</span><span class="t" style="left:414.00px;top:362.04px;font:normal 18.67px/22px 'DejaVu Sans','Liberation Sans',sans-serif;color:#00008b;letter-spacing:-0.158px;">BoneARmB_1</span><span class="t" style="left:862.00px;top:340.54px;font:normal 18.67px/22px 'DejaVu Sans','Liberation Sans',sans-serif;color:#00008b;letter-spacing:-0.170px;">BoneARmA</span><span class="t" style="left:1047.00px;top:363.54px;font:normal 18.67px/22px 'DejaVu Sans','Liberation Sans',sans-serif;color:#00008b;letter-spacing:-0.208px;">BoneARmA_1</span><span class="t" style="left:666.00px;top:490.04px;font:normal 18.67px/22px 'DejaVu Sans','Liberation Sans',sans-serif;color:#00008b;letter-spacing:0.042px;">BoneLegB</span><span class="t" style="left:696.60px;top:496.54px;font:normal 18.67px/22px 'DejaVu Sans','Liberation Sans',sans-serif;color:#00008b;letter-spacing:-0.232px;">BoneBody</span><span class="t" style="left:769.00px;top:487.04px;font:normal 18.67px/22px 'DejaVu Sans','Liberation Sans',sans-serif;color:#00008b;letter-spacing:-0.239px;">BoneLegA</span><span class="t" style="left:409.00px;top:599.54px;font:normal 18.67px/22px 'DejaVu Sans','Liberation Sans',sans-serif;color:#00008b;letter-spacing:-0.158px;">BoneARmB_2</span><span class="t" style="left:1029.00px;top:591.54px;font:normal 18.67px/22px 'DejaVu Sans','Liberation Sans',sans-serif;color:#00008b;letter-spacing:-0.153px;">BoneARmA_2</span><span class="t" style="left:667.00px;top:650.54px;font:normal 18.67px/22px 'DejaVu Sans','Liberation Sans',sans-serif;color:#00008b;letter-spacing:-0.101px;">BoneLegB_1</span><span class="t" style="left:765.00px;top:638.54px;font:normal 18.67px/22px 'DejaVu Sans','Liberation Sans',sans-serif;color:#00008b;letter-spacing:-0.208px;">BoneLegA_1</span><span class="t" style="left:563.00px;top:788.54px;font:normal 18.67px/22px 'DejaVu Sans','Liberation Sans',sans-serif;color:#00008b;letter-spacing:-0.101px;">BoneLegB_3</span><span class="t" style="left:663.00px;top:797.04px;font:normal 18.67px/22px 'DejaVu Sans','Liberation Sans',sans-serif;color:#00008b;letter-spacing:-0.101px;">BoneLegB_2</span><span class="t" style="left:677.00px;top:798.04px;font:normal 18.67px/22px 'DejaVu Sans','Liberation Sans',sans-serif;color:#00008b;letter-spacing:-0.208px;">BoneLegA_3</span><span class="t" style="left:765.00px;top:801.54px;font:normal 18.67px/22px 'DejaVu Sans','Liberation Sans',sans-serif;color:#00008b;letter-spacing:-0.208px;">BoneLegA_2</span></div>
<div class="cedge"></div>
<div class="panel"><div class="a" style="left:1575.4px;top:92.8px;width:63.4px;height:26px;background:linear-gradient(#5b5b59,#3e3e3c);border-radius:4px 4px 0 0"></div><div class="a" style="left:1639.6px;top:92.6px;width:62.8px;height:26px;background:#121211;border-radius:4px 4px 0 0;box-shadow:0 0 0 0.500px #0c0c0c"></div><div class="a" style="left:1703.6px;top:92.6px;width:62.8px;height:26px;background:#121211;border-radius:4px 4px 0 0;box-shadow:0 0 0 0.500px #0c0c0c"></div><div class="a" style="left:1767.6px;top:92.6px;width:62.8px;height:26px;background:#121211;border-radius:4px 4px 0 0;box-shadow:0 0 0 0.500px #0c0c0c"></div><svg style="left:1575px;top:92px;" width="345" height="66" viewBox="1575 92 345 66"><rect x="1591.8999999999999" y="97.200" width="1.800" height="15.600" fill="#d4d4d4"/><circle cx="1592.8" cy="100" r="1.900" fill="#fff"/><rect x="1596.5" y="97.200" width="1.800" height="15.600" fill="#d4d4d4"/><circle cx="1597.4" cy="107.4" r="1.900" fill="#fff"/><rect x="1601.3" y="97.200" width="1.800" height="15.600" fill="#d4d4d4"/><circle cx="1602.2" cy="103.4" r="1.900" fill="#fff"/><rect x="1657.400" y="99.600" width="7" height="7" fill="none" stroke="#cfcfcf" stroke-width="0.900" stroke-dasharray="1.600 1"/><rect x="1661.400" y="103" width="7" height="7" fill="none" stroke="#cfcfcf" stroke-width="0.900" stroke-dasharray="1.600 1"/><circle cx="1657.4" cy="99.6" r="1.100" fill="#f4f4f4"/><circle cx="1664.4" cy="99.6" r="1.100" fill="#f4f4f4"/><circle cx="1657.4" cy="106.6" r="1.100" fill="#f4f4f4"/><circle cx="1664.4" cy="106.6" r="1.100" fill="#f4f4f4"/><circle cx="1661.4" cy="103" r="1.100" fill="#f4f4f4"/><circle cx="1668.4" cy="103" r="1.100" fill="#f4f4f4"/><circle cx="1661.4" cy="110" r="1.100" fill="#f4f4f4"/><circle cx="1668.4" cy="110" r="1.100" fill="#f4f4f4"/><circle cx="1728.800" cy="103.200" r="3.400" fill="#fff"/><circle cx="1724.800" cy="107.400" r="2.200" fill="#9a9a9a"/><circle cx="1723" cy="110.400" r="1.300" fill="#666"/><path d="M1787.200 100.400l10.600 11" stroke="#f0f0f0" stroke-width="1.800"/><circle cx="1786.400" cy="99.600" r="1.500" fill="#ddd"/><path d="M1784 99.600h4.800M1786.400 97.200v4.800M1784.800 98l3.200 3.200M1788 98l-3.200 3.200" stroke="#aaa" stroke-width="0.500"/><path d="M1825.400 151.400q1-11 8.400-16.400q7-6 16.800-8.600" stroke="#9a9a9a" stroke-width="0.800" fill="none"/><rect x="1830.400" y="129.600" width="6.800" height="6.800" fill="#f4f4f4"/><rect x="1848.200" y="123.800" width="4.800" height="4.800" fill="#f4f4f4"/><rect x="1823" y="149.200" width="4.800" height="4.800" fill="#f4f4f4"/><path d="M1873.800 139.200h12.200M1879.900 133.100v12.200" stroke="#e8e8e8" stroke-width="1.300"/></svg><div class="a" style="left:1900.4px;top:159.4px;width:14px;height:894px;background:#3b3b3a;border:1px solid #2d2d2c;box-sizing:border-box"></div><div class="a" style="left:1901.4px;top:177px;width:12px;height:741px;background:#3d3d3c"></div><div class="a" style="left:1901.4px;top:918px;width:12px;height:120px;background:#1f1f1e"></div><div class="a" style="left:1901.4px;top:176px;width:12px;height:1px;background:#262625"></div><svg style="left:1900px;top:159px;" width="15" height="895" viewBox="1900 159 15 895"><path d="M1905 169h4.600l-2.300-3.400zM1905 1043h4.600l-2.300 3.400z" fill="#dfdbd2"/></svg><div class="a" style="left:1581px;top:185px;width:318px;height:88px;background:#333332"></div><div class="a" style="left:1581px;top:300px;width:318px;height:294px;background:#333332"></div><div class="a" style="left:1581px;top:620px;width:318px;height:308px;background:#333332"></div><div class="a" style="left:1581px;top:955px;width:318px;height:98px;background:#333332"></div><div class="a" style="left:1581px;top:162px;width:318px;height:23px;background:#3b3b3a;border-top:1px solid #333332;box-sizing:border-box"></div><div class="a" style="left:1582.4px;top:162px;width:147.4px;height:23px;background:#323231;border-radius:6px 6px 0 0"></div><svg style="left:1584px;top:166px;" width="21" height="16" viewBox="1584 166 21 16"><defs><pattern id="ck166" x="1584" y="166" width="5" height="4" patternUnits="userSpaceOnUse"><rect width="5" height="4" fill="#020202"/><rect width="2.5" height="2" fill="#7c7c7c"/><rect x="2.5" y="2" width="2.5" height="2" fill="#7c7c7c"/></pattern></defs><rect x="1584" y="166" width="20" height="16" fill="url(#ck166)"/></svg><span class="t" style="left:1609.30px;top:165.56px;font:bold 13.4px/16px 'Liberation Sans','DejaVu Sans',sans-serif;color:#ffffff;letter-spacing:-0.175px;">Textures</span><svg style="left:1584px;top:190px;" width="311" height="81" viewBox="1584 190 311 81"><defs><pattern id="tck" x="1584.200" y="190.400" width="30" height="30" patternUnits="userSpaceOnUse"><rect width="30" height="30" fill="#0b0b0a"/><rect width="15" height="15" fill="#1b1b1a"/><rect x="15" y="15" width="15" height="15" fill="#1b1b1a"/></pattern><radialGradient id="tb1"><stop offset="0" stop-color="#e8e8e8"/><stop offset="0.450" stop-color="#cfcfcf" stop-opacity="0.850"/><stop offset="1" stop-color="#888" stop-opacity="0"/></radialGradient><radialGradient id="tb2"><stop offset="0" stop-color="#e0e0e0"/><stop offset="0.350" stop-color="#bbb" stop-opacity="0.700"/><stop offset="1" stop-color="#777" stop-opacity="0"/></radialGradient></defs><rect x="1584.900" y="190.900" width="308.600" height="78.600" fill="url(#tck)" stroke="#7a7a78" stroke-width="1"/><circle cx="1602" cy="209.400" r="11.500" fill="url(#tb1)"/><circle cx="1634.600" cy="210" r="12.500" fill="url(#tb2)"/><rect x="1662.9" y="212.4" width="1.3" height="1.3" fill="#fff" opacity="0.05"/><rect x="1667.5" y="202.7" width="0.9" height="0.9" fill="#fff" opacity="0.06"/><rect x="1662.7" y="206.9" width="0.8" height="0.8" fill="#fff" opacity="0.32"/><rect x="1666.1" y="218.5" width="0.6" height="0.6" fill="#fff" opacity="0.77"/><rect x="1670.5" y="212.1" width="1.3" height="1.3" fill="#fff" opacity="0.48"/><rect x="1675.9" y="211.5" width="0.6" height="0.6" fill="#fff" opacity="0.97"/><rect x="1678.6" y="211.1" width="0.7" height="0.7" fill="#fff" opacity="0.32"/><rect x="1654.7" y="204.0" width="0.9" height="0.9" fill="#fff" opacity="0.75"/><rect x="1670.2" y="217.7" width="1.3" height="1.3" fill="#fff" opacity="0.13"/><rect x="1675.7" y="214.5" width="0.9" height="0.9" fill="#fff" opacity="0.06"/><rect x="1668.8" y="219.3" width="0.8" height="0.8" fill="#fff" opacity="0.71"/><rect x="1651.7" y="210.2" width="0.7" height="0.7" fill="#fff" opacity="0.22"/><rect x="1668.9" y="194.5" width="0.7" height="0.7" fill="#fff" opacity="0.07"/><rect x="1662.3" y="217.4" width="0.7" height="0.7" fill="#fff" opacity="0.65"/><rect x="1662.1" y="221.9" width="0.6" height="0.6" fill="#fff" opacity="0.41"/><rect x="1669.9" y="214.8" width="0.8" height="0.8" fill="#fff" opacity="0.32"/><rect x="1669.5" y="206.0" width="0.9" height="0.9" fill="#fff" opacity="0.47"/><rect x="1671.3" y="200.9" width="1.3" height="1.3" fill="#fff" opacity="0.26"/><rect x="1652.4" y="207.3" width="0.6" height="0.6" fill="#fff" opacity="0.78"/><rect x="1675.0" y="203.4" width="1.3" height="1.3" fill="#fff" opacity="0.06"/><rect x="1664.5" y="198.4" width="0.9" height="0.9" fill="#fff" opacity="0.99"/><rect x="1668.9" y="199.6" width="0.8" height="0.8" fill="#fff" opacity="0.85"/><rect x="1657.3" y="219.3" width="0.7" height="0.7" fill="#fff" opacity="0.12"/><rect x="1668.2" y="209.5" width="0.7" height="0.7" fill="#fff" opacity="0.10"/><rect x="1665.6" y="216.7" width="0.8" height="0.8" fill="#fff" opacity="0.07"/><rect x="1655.1" y="210.6" width="0.7" height="0.7" fill="#fff" opacity="0.76"/><rect x="1670.6" y="200.8" width="0.8" height="0.8" fill="#fff" opacity="0.98"/><rect x="1661.8" y="198.3" width="0.7" height="0.7" fill="#fff" opacity="0.11"/><rect x="1668.7" y="213.7" width="0.7" height="0.7" fill="#fff" opacity="0.04"/><rect x="1668.6" y="201.2" width="0.7" height="0.7" fill="#fff" opacity="0.04"/><rect x="1657.7" y="211.6" width="0.9" height="0.9" fill="#fff" opacity="0.23"/><rect x="1675.1" y="217.2" width="0.9" height="0.9" fill="#fff" opacity="0.56"/><rect x="1664.9" y="196.5" width="1.3" height="1.3" fill="#fff" opacity="0.73"/><rect x="1658.2" y="213.1" width="0.6" height="0.6" fill="#fff" opacity="0.38"/><rect x="1660.3" y="211.0" width="0.7" height="0.7" fill="#fff" opacity="0.34"/><rect x="1674.3" y="214.7" width="0.6" height="0.6" fill="#fff" opacity="0.03"/><rect x="1668.2" y="211.0" width="0.7" height="0.7" fill="#fff" opacity="0.51"/><rect x="1671.6" y="210.0" width="0.8" height="0.8" fill="#fff" opacity="0.11"/><rect x="1665.4" y="216.1" width="0.7" height="0.7" fill="#fff" opacity="0.37"/><rect x="1673.2" y="214.2" width="0.8" height="0.8" fill="#fff" opacity="0.38"/><rect x="1663.4" y="212.4" width="1.3" height="1.3" fill="#fff" opacity="0.25"/><rect x="1664.3" y="221.1" width="0.7" height="0.7" fill="#fff" opacity="0.41"/><rect x="1669.5" y="221.5" width="0.7" height="0.7" fill="#fff" opacity="0.11"/><rect x="1663.2" y="206.3" width="0.9" height="0.9" fill="#fff" opacity="0.21"/><rect x="1662.7" y="203.3" width="0.7" height="0.7" fill="#fff" opacity="0.41"/><rect x="1672.9" y="202.0" width="0.7" height="0.7" fill="#fff" opacity="0.43"/><rect x="1667.0" y="198.2" width="0.7" height="0.7" fill="#fff" opacity="0.51"/><rect x="1668.6" y="193.9" width="0.7" height="0.7" fill="#fff" opacity="0.74"/><rect x="1670.8" y="194.9" width="0.7" height="0.7" fill="#fff" opacity="0.14"/><rect x="1652.9" y="207.6" width="0.6" height="0.6" fill="#fff" opacity="0.72"/><rect x="1659.1" y="208.2" width="0.9" height="0.9" fill="#fff" opacity="0.94"/><rect x="1652.0" y="211.9" width="0.7" height="0.7" fill="#fff" opacity="0.94"/><rect x="1660.9" y="212.5" width="0.7" height="0.7" fill="#fff" opacity="0.37"/><rect x="1660.1" y="216.2" width="0.9" height="0.9" fill="#fff" opacity="0.78"/><rect x="1653.7" y="208.6" width="1.3" height="1.3" fill="#fff" opacity="0.07"/><rect x="1658.0" y="194.5" width="1.3" height="1.3" fill="#fff" opacity="0.67"/><rect x="1659.3" y="207.9" width="1.3" height="1.3" fill="#fff" opacity="0.24"/><rect x="1670.1" y="192.5" width="0.8" height="0.8" fill="#fff" opacity="0.36"/><rect x="1665.3" y="202.5" width="0.7" height="0.7" fill="#fff" opacity="0.12"/><rect x="1669.5" y="211.3" width="0.8" height="0.8" fill="#fff" opacity="0.74"/><rect x="1673.6" y="218.2" width="0.8" height="0.8" fill="#fff" opacity="0.56"/><rect x="1659.1" y="216.3" width="0.7" height="0.7" fill="#fff" opacity="0.04"/><rect x="1669.3" y="194.4" width="0.6" height="0.6" fill="#fff" opacity="0.42"/><rect x="1674.4" y="202.9" width="0.7" height="0.7" fill="#fff" opacity="0.77"/><rect x="1667.3" y="214.5" width="0.7" height="0.7" fill="#fff" opacity="0.40"/><rect x="1666.2" y="198.2" width="0.9" height="0.9" fill="#fff" opacity="0.32"/><rect x="1675.0" y="217.8" width="0.7" height="0.7" fill="#fff" opacity="0.86"/><rect x="1658.6" y="195.1" width="0.9" height="0.9" fill="#fff" opacity="0.32"/><rect x="1674.6" y="201.6" width="0.9" height="0.9" fill="#fff" opacity="0.11"/><rect x="1651.8" y="206.0" width="0.7" height="0.7" fill="#fff" opacity="0.51"/><rect x="1666.4" y="201.1" width="0.7" height="0.7" fill="#fff" opacity="0.37"/><rect x="1663.8" y="195.6" width="0.7" height="0.7" fill="#fff" opacity="0.59"/><rect x="1655.5" y="204.9" width="0.6" height="0.6" fill="#fff" opacity="0.84"/><rect x="1671.5" y="209.4" width="0.6" height="0.6" fill="#fff" opacity="0.70"/><rect x="1654.5" y="206.4" width="0.6" height="0.6" fill="#fff" opacity="0.34"/><rect x="1657.5" y="199.8" width="0.9" height="0.9" fill="#fff" opacity="0.14"/><rect x="1663.7" y="217.9" width="0.8" height="0.8" fill="#fff" opacity="0.40"/><rect x="1665.7" y="218.2" width="0.7" height="0.7" fill="#fff" opacity="0.89"/><rect x="1670.7" y="202.6" width="0.8" height="0.8" fill="#fff" opacity="0.10"/><rect x="1672.6" y="214.1" width="0.6" height="0.6" fill="#fff" opacity="0.58"/><rect x="1659.4" y="210.1" width="0.7" height="0.7" fill="#fff" opacity="0.71"/><rect x="1670.1" y="203.3" width="1.3" height="1.3" fill="#fff" opacity="0.55"/><rect x="1660.6" y="212.8" width="0.7" height="0.7" fill="#fff" opacity="0.95"/><rect x="1668.2" y="221.9" width="0.8" height="0.8" fill="#fff" opacity="0.84"/><rect x="1671.8" y="217.8" width="0.7" height="0.7" fill="#fff" opacity="0.12"/><rect x="1655.9" y="211.6" width="0.7" height="0.7" fill="#fff" opacity="0.32"/><rect x="1662.7" y="210.7" width="0.7" height="0.7" fill="#fff" opacity="0.04"/><rect x="1656.3" y="203.6" width="0.6" height="0.6" fill="#fff" opacity="0.29"/><rect x="1657.5" y="206.1" width="0.6" height="0.6" fill="#fff" opacity="0.09"/><rect x="1671.6" y="203.4" width="0.6" height="0.6" fill="#fff" opacity="0.07"/><rect x="1663.6" y="221.6" width="0.7" height="0.7" fill="#fff" opacity="0.19"/><rect x="1672.1" y="214.3" width="1.3" height="1.3" fill="#fff" opacity="0.76"/><rect x="1665.2" y="213.0" width="0.9" height="0.9" fill="#fff" opacity="0.47"/><rect x="1664.1" y="202.6" width="0.6" height="0.6" fill="#fff" opacity="0.73"/><rect x="1671.2" y="220.4" width="0.7" height="0.7" fill="#fff" opacity="0.91"/><rect x="1656.7" y="196.6" width="0.6" height="0.6" fill="#fff" opacity="0.51"/><rect x="1666.8" y="214.9" width="0.6" height="0.6" fill="#fff" opacity="0.35"/><rect x="1659.7" y="216.8" width="0.7" height="0.7" fill="#fff" opacity="0.52"/><rect x="1677.4" y="210.5" width="0.6" height="0.6" fill="#fff" opacity="0.96"/><rect x="1665.0" y="213.6" width="0.7" height="0.7" fill="#fff" opacity="0.53"/><rect x="1658.9" y="205.6" width="0.8" height="0.8" fill="#fff" opacity="0.40"/><rect x="1669.3" y="215.2" width="0.6" height="0.6" fill="#fff" opacity="0.99"/><rect x="1667.4" y="207.5" width="0.9" height="0.9" fill="#fff" opacity="0.45"/><rect x="1669.3" y="216.9" width="0.8" height="0.8" fill="#fff" opacity="0.08"/><rect x="1669.6" y="197.8" width="0.8" height="0.8" fill="#fff" opacity="0.44"/><rect x="1676.6" y="197.2" width="0.7" height="0.7" fill="#fff" opacity="0.60"/><rect x="1674.1" y="206.0" width="1.3" height="1.3" fill="#fff" opacity="0.65"/><rect x="1674.9" y="218.9" width="0.6" height="0.6" fill="#fff" opacity="0.78"/><rect x="1677.1" y="208.1" width="0.7" height="0.7" fill="#fff" opacity="0.33"/><rect x="1676.8" y="211.3" width="0.8" height="0.8" fill="#fff" opacity="0.82"/><rect x="1661.8" y="199.8" width="0.7" height="0.7" fill="#fff" opacity="0.60"/><rect x="1671.6" y="208.9" width="0.7" height="0.7" fill="#fff" opacity="0.34"/><rect x="1664.3" y="222.1" width="0.9" height="0.9" fill="#fff" opacity="0.24"/><rect x="1679.0" y="210.1" width="0.7" height="0.7" fill="#fff" opacity="0.26"/><rect x="1674.6" y="207.1" width="0.8" height="0.8" fill="#fff" opacity="0.20"/><rect x="1661.4" y="200.6" width="0.6" height="0.6" fill="#fff" opacity="0.08"/><rect x="1667.8" y="201.6" width="0.9" height="0.9" fill="#fff" opacity="0.05"/><rect x="1673.5" y="208.2" width="0.7" height="0.7" fill="#fff" opacity="0.07"/><rect x="1678.6" y="203.2" width="0.7" height="0.7" fill="#fff" opacity="0.56"/><rect x="1662.6" y="192.8" width="0.8" height="0.8" fill="#fff" opacity="0.69"/><rect x="1879.800" y="191.400" width="13.200" height="77.600" fill="#333332"/><rect x="1879.800" y="208.600" width="13.200" height="42.400" fill="#3a3a39"/><path d="M1879.800 208.400h13.200M1879.800 251.200h13.200" stroke="#1c1c1c" stroke-width="1"/><path d="M1884.200 201.400h4.400l-2.200-3.200zM1884.200 258.400h4.400l-2.200 3.200z" fill="#dfdbd2"/></svg><div class="a" style="left:1581px;top:277.6px;width:318px;height:23px;background:#3b3b3a;border-top:1px solid #333332;box-sizing:border-box"></div><div class="a" style="left:1582.4px;top:277.6px;width:147.4px;height:23px;background:#323231;border-radius:6px 6px 0 0"></div><div class="a" style="left:1584.1999999999998px;top:278.90000000000003px;width:20.8px;height:20.8px;border-radius:50%;background:radial-gradient(circle,#ffffff 0,rgba(255,255,255,.75) 22%,rgba(255,255,255,0) 72%),conic-gradient(from 90deg,#ff0000,#ff00ff,#0000ff,#00ffff,#00ff00,#ffff00,#ff0000)"></div><span class="t" style="left:1609.30px;top:281.16px;font:bold 13.4px/16px 'Liberation Sans','DejaVu Sans',sans-serif;color:#ffffff;letter-spacing:-0.644px;">Colors</span><span class="t" style="left:1588.40px;top:302.56px;font:normal 13.4px/16px 'Liberation Sans','DejaVu Sans',sans-serif;color:#dfdbd2;letter-spacing:-0.073px;">Contour</span><span class="t" style="left:1758.40px;top:302.56px;font:normal 13.4px/16px 'Liberation Sans','DejaVu Sans',sans-serif;color:#dfdbd2;letter-spacing:-0.036px;">Fill</span><div class="a" style="left:1679.0px;top:304.6px;width:16.4px;height:16.4px;border-radius:50%;background:radial-gradient(circle,#ffffff 0,rgba(255,255,255,.75) 22%,rgba(255,255,255,0) 72%),conic-gradient(from 90deg,#ff0000,#ff00ff,#0000ff,#00ffff,#00ff00,#ffff00,#ff0000)"></div><div class="a" style="left:1849.0px;top:304.6px;width:16.4px;height:16.4px;border-radius:50%;background:radial-gradient(circle,#ffffff 0,rgba(255,255,255,.75) 22%,rgba(255,255,255,0) 72%),conic-gradient(from 90deg,#ff0000,#ff00ff,#0000ff,#00ffff,#00ff00,#ffff00,#ff0000)"></div><svg style="left:1703.2px;top:304.4px;" width="18" height="18" viewBox="1703.2 304.4 18 18"><g transform="translate(1703.2,304.4)"><path d="M2 16.200L1.400 14l8-8.200 2.400 2.400-8 8.200z" fill="none" stroke="#d8d8d8" stroke-width="1"/><path d="M8.600 4.600l4.400 4.400" stroke="#f2f2f2" stroke-width="2.200" stroke-linecap="round"/><circle cx="13.600" cy="3.800" r="3" fill="#f6f6f6"/><path d="M10.400 6.800l3-3" stroke="#f6f6f6" stroke-width="3"/></g></svg><svg style="left:1873.2px;top:304.4px;" width="18" height="18" viewBox="1873.2 304.4 18 18"><g transform="translate(1873.2,304.4)"><path d="M2 16.200L1.400 14l8-8.200 2.400 2.400-8 8.200z" fill="none" stroke="#d8d8d8" stroke-width="1"/><path d="M8.600 4.600l4.400 4.400" stroke="#f2f2f2" stroke-width="2.200" stroke-linecap="round"/><circle cx="13.600" cy="3.800" r="3" fill="#f6f6f6"/><path d="M10.400 6.800l3-3" stroke="#f6f6f6" stroke-width="3"/></g></svg><div class="a" style="left:1602px;top:325px;width:20px;height:15px;background:#000;border-radius:6px"></div><div class="a" style="left:1772px;top:325px;width:20px;height:15px;background:#000;border-radius:6px"></div><div class="a" style="left:1607px;top:330.2px;width:100px;height:100px;border-radius:50%;background:conic-gradient(from 90deg,#ff0000,#ff00ff,#0000ff,#00ffff,#00ff00,#ffff00,#ff0000);"></div><div class="a" style="left:1776.8px;top:330.2px;width:100px;height:100px;border-radius:50%;background:conic-gradient(from 90deg,#ff0000,#ff00ff,#0000ff,#00ffff,#00ff00,#ffff00,#ff0000);"></div><svg style="left:1600px;top:320px;" width="300" height="120" viewBox="1600 320 300 120"><circle cx="1680" cy="380.600" r="5" fill="#ff0000" stroke="#fff" stroke-width="2.300"/><circle cx="1874" cy="380.600" r="5" fill="#ff0000" stroke="#fff" stroke-width="2.300"/><path d="M1731.400 369.400h9.600" stroke="#fff" stroke-width="1.700"/><path d="M1739.600 365.200l6.800 4.200-6.800 4.200z" fill="#fff"/><path d="M1746.400 409.600h-9.600" stroke="#fff" stroke-width="1.700"/><path d="M1738.200 405.400l-6.800 4.200 6.800 4.200z" fill="#fff"/></svg><div class="a" style="left:1584px;top:439px;width:140.4px;height:8.2px;border-radius:4px;background:linear-gradient(90deg,#000 0,#000 49.7%,#f4f4f4 100%)"></div><div class="a" style="left:1584px;top:457px;width:140.4px;height:8.2px;border-radius:4px;background:linear-gradient(90deg,#000 0,rgba(0,0,0,.75) 40%,rgba(0,0,0,0) 100%),conic-gradient(#6a6a6a 0 25%,#050505 0 50%,#6a6a6a 0 75%,#050505 0) 0 0/8.200px 8.200px"></div><svg style="left:1584px;top:438px;" width="142" height="34" viewBox="1584 438 142 34"><rect x="1652.8999999999999" y="438.600" width="1.800" height="9" fill="#fff"/><path d="M1653.8 448.600l4.600 7.400h-9.200z" fill="#efefe8"/><rect x="1722.2" y="456.600" width="1.800" height="9" fill="#fff"/><path d="M1724.2 464.600v6.400h-4.200z" fill="#efefe8"/></svg><div class="a" style="left:1754px;top:439px;width:140.4px;height:8.2px;border-radius:4px;background:linear-gradient(90deg,#000 0,#000 49.9%,#f4f4f4 100%)"></div><div class="a" style="left:1754px;top:457px;width:140.4px;height:8.2px;border-radius:4px;background:linear-gradient(90deg,#000 0,rgba(0,0,0,.75) 40%,rgba(0,0,0,0) 100%),conic-gradient(#6a6a6a 0 25%,#050505 0 50%,#6a6a6a 0 75%,#050505 0) 0 0/8.200px 8.200px"></div><svg style="left:1754px;top:438px;" width="142" height="34" viewBox="1754 438 142 34"><rect x="1823.1" y="438.600" width="1.800" height="9" fill="#fff"/><path d="M1824 448.600l4.600 7.400h-9.200z" fill="#efefe8"/><rect x="1892.2" y="456.600" width="1.800" height="9" fill="#fff"/><path d="M1894.2 464.600v6.400h-4.200z" fill="#efefe8"/></svg><div class="a" style="left:1584.4px;top:474.6px;width:248px;height:24px;background:#373736;border:1px solid #2b2b2a;box-sizing:border-box;border-radius:2px"></div><span class="t" style="left:1585.80px;top:477.80px;font:normal 15px/18px 'Liberation Sans','DejaVu Sans',sans-serif;color:#dfdbd2;letter-spacing:0.328px;">Default Palette</span><svg style="left:1820px;top:482px;" width="9" height="8" viewBox="1820 482 9 8"><path d="M1821.600 484h4.800l-2.400 3.600z" fill="#dfdbd2"/></svg><div class="a" style="left:1834.8px;top:475px;width:27.4px;height:23px;background:linear-gradient(#5a5a59,#484847);border-radius:4px;box-shadow:0 0 0 1px #2c2c2b"></div><div class="a" style="left:1864.8px;top:475px;width:27.4px;height:23px;background:linear-gradient(#5a5a59,#484847);border-radius:4px;box-shadow:0 0 0 1px #2c2c2b"></div><span class="t" style="left:1844.40px;top:478.50px;font:normal 13px/16px 'Liberation Sans','DejaVu Sans',sans-serif;color:#b8b5ae;letter-spacing:0.000px;">+</span><span class="t" style="left:1876.40px;top:478.10px;font:normal 13px/16px 'Liberation Sans','DejaVu Sans',sans-serif;color:#b8b5ae;letter-spacing:0.000px;">-</span><svg style="left:1584px;top:503px;" width="310" height="83" viewBox="1584 503 310 83"><rect x="1585.0" y="504" width="18.200" height="18.200" fill="#45515b"/><rect x="1605.6" y="504" width="18.200" height="18.200" fill="#1c2b37"/><rect x="1626.3" y="504" width="18.200" height="18.200" fill="#010d19"/><rect x="1646.9" y="504" width="18.200" height="18.200" fill="#7fffd4"/><rect x="1667.6" y="504" width="18.200" height="18.200" fill="#6b4f3b"/><rect x="1688.2" y="504" width="18.200" height="18.200" fill="#ff6600"/><rect x="1708.9" y="504" width="18.200" height="18.200" fill="#000000"/><rect x="1729.5" y="504" width="18.200" height="18.200" fill="#4a3d2e"/><rect x="1750.1" y="504" width="18.200" height="18.200" fill="#ffee00"/><rect x="1770.8" y="504" width="18.200" height="18.200" fill="#ffff6e"/><rect x="1791.4" y="504" width="18.200" height="18.200" fill="#f5dfc6"/><rect x="1812.1" y="504" width="18.200" height="18.200" fill="#a52a2a"/><rect x="1832.7" y="504" width="18.200" height="18.200" fill="#7fcd7a"/><rect x="1853.4" y="504" width="18.200" height="18.200" fill="#00699c"/><rect x="1874.0" y="504" width="18.200" height="18.200" fill="#a08d6e"/><rect x="1585.0" y="524.4" width="18.200" height="18.200" fill="#d2691e"/><rect x="1605.6" y="524.4" width="18.200" height="18.200" fill="#ff7f50"/><rect x="1626.3" y="524.4" width="18.200" height="18.200" fill="#6495ed"/><rect x="1646.9" y="524.4" width="18.200" height="18.200" fill="#fff8dc"/><rect x="1667.6" y="524.4" width="18.200" height="18.200" fill="#dc143c"/><rect x="1688.2" y="524.4" width="18.200" height="18.200" fill="#00ffff"/><rect x="1708.9" y="524.4" width="18.200" height="18.200" fill="#00008b"/><rect x="1729.5" y="524.4" width="18.200" height="18.200" fill="#008b8b"/><rect x="1750.1" y="524.4" width="18.200" height="18.200" fill="#ff5500"/><rect x="1770.8" y="524.4" width="18.200" height="18.200" fill="#a9a9a9"/><rect x="1791.4" y="524.4" width="18.200" height="18.200" fill="#006400"/><rect x="1812.1" y="524.4" width="18.200" height="18.200" fill="#a9a9a9"/><rect x="1832.7" y="524.4" width="18.200" height="18.200" fill="#bdb76b"/><rect x="1853.4" y="524.4" width="18.200" height="18.200" fill="#8b008b"/><rect x="1874.0" y="524.4" width="18.200" height="18.200" fill="#556b2f"/><rect x="1585.0" y="545" width="18.200" height="18.200" fill="#1e1e1d"/><path d="M1585.0 545l18.200 18.200M1603.2 545l-18.200 18.200" stroke="#343433" stroke-width="0.800"/><rect x="1605.6" y="545" width="18.200" height="18.200" fill="#1e1e1d"/><path d="M1605.6 545l18.200 18.200M1623.8 545l-18.200 18.200" stroke="#343433" stroke-width="0.800"/><rect x="1626.3" y="545" width="18.200" height="18.200" fill="#1e1e1d"/><path d="M1626.3 545l18.200 18.200M1644.5 545l-18.200 18.200" stroke="#343433" stroke-width="0.800"/><rect x="1646.9" y="545" width="18.200" height="18.200" fill="#ff0033"/><rect x="1667.6" y="545" width="18.200" height="18.200" fill="#0000ff"/><rect x="1688.2" y="545" width="18.200" height="18.200" fill="#1e1e1d"/><path d="M1688.2 545l18.200 18.200M1706.4 545l-18.200 18.200" stroke="#343433" stroke-width="0.800"/><rect x="1708.9" y="545" width="18.200" height="18.200" fill="#1e1e1d"/><path d="M1708.9 545l18.200 18.200M1727.1 545l-18.200 18.200" stroke="#343433" stroke-width="0.800"/><rect x="1729.5" y="545" width="18.200" height="18.200" fill="#0088ff"/><rect x="1750.1" y="545" width="18.200" height="18.200" fill="#1e1e1d"/><path d="M1750.1 545l18.200 18.200M1768.3 545l-18.200 18.200" stroke="#343433" stroke-width="0.800"/><rect x="1770.8" y="545" width="18.200" height="18.200" fill="#ff0022"/><rect x="1791.4" y="545" width="18.200" height="18.200" fill="#1e1e1d"/><path d="M1791.4 545l18.200 18.200M1809.6 545l-18.200 18.200" stroke="#343433" stroke-width="0.800"/><rect x="1812.1" y="545" width="18.200" height="18.200" fill="#ff0022"/><rect x="1832.7" y="545" width="18.200" height="18.200" fill="#1e1e1d"/><path d="M1832.7 545l18.200 18.200M1850.9 545l-18.200 18.200" stroke="#343433" stroke-width="0.800"/><rect x="1853.4" y="545" width="18.200" height="18.200" fill="#4400ff"/><rect x="1874.0" y="545" width="18.200" height="18.200" fill="#00ff00"/><rect x="1585.0" y="566" width="18.200" height="18.200" fill="#12306a"/><rect x="1605.6" y="566" width="18.200" height="18.200" fill="#002456"/><rect x="1626.3" y="566" width="18.200" height="18.200" fill="#111a30"/><rect x="1646.9" y="566" width="18.200" height="18.200" fill="#1e1e1d"/><path d="M1646.9 566l18.200 18.200M1665.1 566l-18.200 18.200" stroke="#343433" stroke-width="0.800"/><rect x="1667.6" y="566" width="18.200" height="18.200" fill="#00ff7f"/><rect x="1688.2" y="566" width="18.200" height="18.200" fill="#6495ed"/><rect x="1708.9" y="566" width="18.200" height="18.200" fill="#33ff00"/><rect x="1729.5" y="566" width="18.200" height="18.200" fill="#ff0000"/><rect x="1750.1" y="566" width="18.200" height="18.200" fill="#0055ff"/><rect x="1770.8" y="566" width="18.200" height="18.200" fill="#1e1e1d"/><path d="M1770.8 566l18.200 18.200M1789.0 566l-18.200 18.200" stroke="#343433" stroke-width="0.800"/><rect x="1791.4" y="566" width="18.200" height="18.200" fill="#4400ff"/><rect x="1812.1" y="566" width="18.200" height="18.200" fill="#ff2200"/><rect x="1832.7" y="566" width="18.200" height="18.200" fill="#00162a"/><rect x="1853.4" y="566" width="18.200" height="18.200" fill="#bfff00"/><rect x="1874.0" y="566" width="18.200" height="18.200" fill="#222e38"/></svg><div class="a" style="left:1581px;top:596.9px;width:318px;height:23px;background:#3b3b3a;border-top:1px solid #333332;box-sizing:border-box"></div><div class="a" style="left:1582.4px;top:596.9px;width:147.4px;height:23px;background:#323231;border-radius:6px 6px 0 0"></div><svg style="left:1584px;top:598.6px;" width="21" height="20" viewBox="1584 598.6 21 20"><path d="M1586.400 604.200q3.400-2.400 5.600 1l9.200 10.400-2.400 2-9.400-10q-3.800 0-3-3.400z" fill="#5b5b5a"/><path d="M1602.600 601.600l-12 12.400-4.400 5.400" stroke="#060606" stroke-width="2.600" stroke-linecap="round"/><path d="M1588.800 615.600l-3.200 4" stroke="#888" stroke-width="1.200"/></svg><span class="t" style="left:1609.30px;top:600.46px;font:bold 13.4px/16px 'Liberation Sans','DejaVu Sans',sans-serif;color:#ffffff;letter-spacing:-0.291px;">Adjustments</span><span class="t" style="left:1588.40px;top:622.56px;font:normal 13.4px/16px 'Liberation Sans','DejaVu Sans',sans-serif;color:#dfdbd2;letter-spacing:-1.021px;">Size</span><div class="a" style="left:1580px;top:641.0px;width:318.4px;height:25.6px;background:linear-gradient(#1f2323 0,#0d2625 22%,#0a2a28 50%,#0d2625 78%,#1f2323 100%);border-radius:13px;box-shadow:0 0 2px 1px rgba(20,30,30,.5)"></div><div class="a" style="left:1584.4px;top:644.1999999999999px;width:18.6px;height:19.4px;background:linear-gradient(#636363,#525252);border-radius:9px 0 0 9px"></div><div class="a" style="left:1604.2px;top:644.1999999999999px;width:18.6px;height:19.4px;background:linear-gradient(#606060,#4e4e4e);border-radius:0 3px 3px 0"></div><svg style="left:1580px;top:640.8px;" width="320" height="26" viewBox="1580 640.8 320 26"><path d="M1589.6 649.5999999999999l8.200 8.400M1597.8 649.5999999999999l-8.200 8.400" stroke="#fff" stroke-width="1.900"/><path d="M1609.2 654.1999999999999l2.800 3 6.200-6.600" stroke="#e8e8e8" stroke-width="1.100" fill="none"/><defs><pattern id="pv653" x="1626" y="643.5999999999999" width="20" height="20" patternUnits="userSpaceOnUse"><rect width="20" height="20" fill="#062a2a"/><rect width="10" height="10" fill="#010101"/><rect x="10" y="10" width="10" height="10" fill="#010101"/></pattern></defs><rect x="1626.500" y="644.0999999999999" width="73.600" height="19.400" rx="4" fill="url(#pv653)" stroke="#0b8f8f" stroke-width="1"/><circle cx="1662.300" cy="653.4" r="0.850" fill="#fff"/><rect x="1705.4" y="650.8" width="96.5" height="5" fill="#5583d0"/><rect x="1705.4" y="650.8" width="96.5" height="1" fill="#a09c98"/><rect x="1705.4" y="654.8" width="96.5" height="1" fill="#a09c98"/><rect x="1801.9" y="650.8" width="86.5" height="5" fill="#0a379c"/><rect x="1801.9" y="651.5999999999999" width="86.1" height="3.200" fill="#fff"/><circle cx="1801.9" cy="653.3" r="6" fill="#fff"/></svg><span class="t" style="left:1588.40px;top:670.96px;font:normal 13.4px/16px 'Liberation Sans','DejaVu Sans',sans-serif;color:#dfdbd2;letter-spacing:0.132px;">Rotation</span><div class="a" style="left:1580px;top:691.0px;width:318.4px;height:25.6px;background:linear-gradient(#1f2323 0,#0d2625 22%,#0a2a28 50%,#0d2625 78%,#1f2323 100%);border-radius:13px;box-shadow:0 0 2px 1px rgba(20,30,30,.5)"></div><div class="a" style="left:1584.4px;top:694.1999999999999px;width:18.6px;height:19.4px;background:linear-gradient(#636363,#525252);border-radius:9px 0 0 9px"></div><div class="a" style="left:1604.2px;top:694.1999999999999px;width:18.6px;height:19.4px;background:linear-gradient(#606060,#4e4e4e);border-radius:0 3px 3px 0"></div><svg style="left:1580px;top:690.8px;" width="320" height="26" viewBox="1580 690.8 320 26"><path d="M1589.6 699.5999999999999l8.200 8.400M1597.8 699.5999999999999l-8.200 8.400" stroke="#fff" stroke-width="1.900"/><path d="M1609.2 704.1999999999999l2.800 3 6.200-6.600" stroke="#e8e8e8" stroke-width="1.100" fill="none"/><defs><pattern id="pv703" x="1626" y="693.5999999999999" width="20" height="20" patternUnits="userSpaceOnUse"><rect width="20" height="20" fill="#062a2a"/><rect width="10" height="10" fill="#010101"/><rect x="10" y="10" width="10" height="10" fill="#010101"/></pattern></defs><rect x="1626.500" y="694.0999999999999" width="73.600" height="19.400" rx="4" fill="url(#pv703)" stroke="#0b8f8f" stroke-width="1"/><rect x="1655" y="696.1999999999999" width="16" height="15.600" fill="#fff"/><rect x="1705.4" y="700.8" width="91.79999999999995" height="5" fill="#5583d0"/><rect x="1705.4" y="700.8" width="91.79999999999995" height="1" fill="#a09c98"/><rect x="1705.4" y="704.8" width="91.79999999999995" height="1" fill="#a09c98"/><rect x="1797.2" y="700.8" width="91.20000000000005" height="5" fill="#0a379c"/><rect x="1797.2" y="701.5999999999999" width="90.80000000000004" height="3.200" fill="#fff"/><circle cx="1797.2" cy="703.3" r="6" fill="#fff"/></svg><span class="t" style="left:1588.40px;top:720.96px;font:normal 13.4px/16px 'Liberation Sans','DejaVu Sans',sans-serif;color:#dfdbd2;letter-spacing:-0.270px;">Transparency</span><div class="a" style="left:1580px;top:741.0px;width:318.4px;height:25.6px;background:linear-gradient(#1f2323 0,#0d2625 22%,#0a2a28 50%,#0d2625 78%,#1f2323 100%);border-radius:13px;box-shadow:0 0 2px 1px rgba(20,30,30,.5)"></div><div class="a" style="left:1584.4px;top:744.1999999999999px;width:18.6px;height:19.4px;background:linear-gradient(#636363,#525252);border-radius:9px 0 0 9px"></div><div class="a" style="left:1604.2px;top:744.1999999999999px;width:18.6px;height:19.4px;background:linear-gradient(#606060,#4e4e4e);border-radius:0 3px 3px 0"></div><svg style="left:1580px;top:740.8px;" width="320" height="26" viewBox="1580 740.8 320 26"><path d="M1589.6 749.5999999999999l8.200 8.400M1597.8 749.5999999999999l-8.200 8.400" stroke="#fff" stroke-width="1.900"/><path d="M1609.2 754.1999999999999l2.800 3 6.200-6.600" stroke="#e8e8e8" stroke-width="1.100" fill="none"/><defs><pattern id="pv753" x="1626" y="743.5999999999999" width="20" height="20" patternUnits="userSpaceOnUse"><rect width="20" height="20" fill="#062a2a"/><rect width="10" height="10" fill="#010101"/><rect x="10" y="10" width="10" height="10" fill="#010101"/></pattern></defs><rect x="1626.500" y="744.0999999999999" width="73.600" height="19.400" rx="4" fill="url(#pv753)" stroke="#0b8f8f" stroke-width="1"/><rect x="1655" y="746.1999999999999" width="16" height="15.600" fill="#fff"/><rect x="1705.4" y="750.8" width="177.5999999999999" height="5" fill="#5583d0"/><rect x="1705.4" y="750.8" width="177.5999999999999" height="1" fill="#a09c98"/><rect x="1705.4" y="754.8" width="177.5999999999999" height="1" fill="#a09c98"/><rect x="1883" y="750.8" width="5.400000000000091" height="5" fill="#0a379c"/><rect x="1883" y="751.5999999999999" width="5.000000000000091" height="3.200" fill="#fff"/><circle cx="1883" cy="753.3" r="6" fill="#fff"/></svg><span class="t" style="left:1588.40px;top:770.66px;font:normal 13.4px/16px 'Liberation Sans','DejaVu Sans',sans-serif;color:#dfdbd2;letter-spacing:-0.319px;">Spacement</span><div class="a" style="left:1580px;top:791.0px;width:318.4px;height:25.6px;background:linear-gradient(#1f2323 0,#0d2625 22%,#0a2a28 50%,#0d2625 78%,#1f2323 100%);border-radius:13px;box-shadow:0 0 2px 1px rgba(20,30,30,.5)"></div><div class="a" style="left:1584.4px;top:794.1999999999999px;width:18.6px;height:19.4px;background:linear-gradient(#636363,#525252);border-radius:9px 0 0 9px"></div><div class="a" style="left:1604.2px;top:794.1999999999999px;width:18.6px;height:19.4px;background:linear-gradient(#606060,#4e4e4e);border-radius:0 3px 3px 0"></div><svg style="left:1580px;top:790.8px;" width="320" height="26" viewBox="1580 790.8 320 26"><path d="M1589.6 799.5999999999999l8.200 8.400M1597.8 799.5999999999999l-8.200 8.400" stroke="#fff" stroke-width="1.900"/><path d="M1609.2 804.1999999999999l2.800 3 6.200-6.600" stroke="#e8e8e8" stroke-width="1.100" fill="none"/><defs><pattern id="pv803" x="1626" y="793.5999999999999" width="20" height="20" patternUnits="userSpaceOnUse"><rect width="20" height="20" fill="#062a2a"/><rect width="10" height="10" fill="#010101"/><rect x="10" y="10" width="10" height="10" fill="#010101"/></pattern></defs><rect x="1626.500" y="794.0999999999999" width="73.600" height="19.400" rx="4" fill="url(#pv803)" stroke="#0b8f8f" stroke-width="1"/><rect x="1635" y="799.4" width="54" height="7.800" fill="#fff"/><rect x="1705.4" y="800.8" width="5.599999999999909" height="5" fill="#5583d0"/><rect x="1705.4" y="800.8" width="5.599999999999909" height="1" fill="#a09c98"/><rect x="1705.4" y="804.8" width="5.599999999999909" height="1" fill="#a09c98"/><rect x="1711" y="800.8" width="177.4000000000001" height="5" fill="#0a379c"/><rect x="1711" y="801.5999999999999" width="177.00000000000009" height="3.200" fill="#fff"/><circle cx="1711" cy="803.3" r="6" fill="#fff"/></svg><span class="t" style="left:1588.40px;top:821.06px;font:normal 13.4px/16px 'Liberation Sans','DejaVu Sans',sans-serif;color:#dfdbd2;letter-spacing:-0.065px;">Rotation Noise</span><div class="a" style="left:1580px;top:841.0px;width:318.4px;height:25.6px;background:linear-gradient(#1f2323 0,#0d2625 22%,#0a2a28 50%,#0d2625 78%,#1f2323 100%);border-radius:13px;box-shadow:0 0 2px 1px rgba(20,30,30,.5)"></div><div class="a" style="left:1584.4px;top:844.1999999999999px;width:18.6px;height:19.4px;background:linear-gradient(#636363,#525252);border-radius:9px 0 0 9px"></div><div class="a" style="left:1604.2px;top:844.1999999999999px;width:18.6px;height:19.4px;background:linear-gradient(#606060,#4e4e4e);border-radius:0 3px 3px 0"></div><svg style="left:1580px;top:840.8px;" width="320" height="26" viewBox="1580 840.8 320 26"><path d="M1589.6 849.5999999999999l8.200 8.400M1597.8 849.5999999999999l-8.200 8.400" stroke="#fff" stroke-width="1.900"/><path d="M1609.2 854.1999999999999l2.800 3 6.200-6.600" stroke="#e8e8e8" stroke-width="1.100" fill="none"/><defs><pattern id="pv853" x="1626" y="843.5999999999999" width="20" height="20" patternUnits="userSpaceOnUse"><rect width="20" height="20" fill="#062a2a"/><rect width="10" height="10" fill="#010101"/><rect x="10" y="10" width="10" height="10" fill="#010101"/></pattern></defs><rect x="1626.500" y="844.0999999999999" width="73.600" height="19.400" rx="4" fill="url(#pv853)" stroke="#0b8f8f" stroke-width="1"/><rect x="1634.0" y="850.0" width="2.800" height="8" fill="#fff"/><rect x="1658.0" y="850.0" width="2.800" height="8" fill="#fff"/><rect x="1682.0" y="850.0" width="2.800" height="8" fill="#fff"/><rect x="1705.4" y="850.8" width="5.599999999999909" height="5" fill="#5583d0"/><rect x="1705.4" y="850.8" width="5.599999999999909" height="1" fill="#a09c98"/><rect x="1705.4" y="854.8" width="5.599999999999909" height="1" fill="#a09c98"/><rect x="1711" y="850.8" width="177.4000000000001" height="5" fill="#0a379c"/><rect x="1711" y="851.5999999999999" width="177.00000000000009" height="3.200" fill="#fff"/><circle cx="1711" cy="853.3" r="6" fill="#fff"/></svg><span class="t" style="left:1588.40px;top:870.56px;font:normal 13.4px/16px 'Liberation Sans','DejaVu Sans',sans-serif;color:#dfdbd2;letter-spacing:-0.124px;">Position Noise</span><div class="a" style="left:1580px;top:891.0px;width:318.4px;height:25.6px;background:linear-gradient(#1f2323 0,#0d2625 22%,#0a2a28 50%,#0d2625 78%,#1f2323 100%);border-radius:13px;box-shadow:0 0 2px 1px rgba(20,30,30,.5)"></div><div class="a" style="left:1584.4px;top:894.1999999999999px;width:18.6px;height:19.4px;background:linear-gradient(#636363,#525252);border-radius:9px 0 0 9px"></div><div class="a" style="left:1604.2px;top:894.1999999999999px;width:18.6px;height:19.4px;background:linear-gradient(#606060,#4e4e4e);border-radius:0 3px 3px 0"></div><svg style="left:1580px;top:890.8px;" width="320" height="26" viewBox="1580 890.8 320 26"><path d="M1589.6 899.5999999999999l8.200 8.400M1597.8 899.5999999999999l-8.200 8.400" stroke="#fff" stroke-width="1.900"/><path d="M1609.2 904.1999999999999l2.800 3 6.200-6.600" stroke="#e8e8e8" stroke-width="1.100" fill="none"/><defs><pattern id="pv903" x="1626" y="893.5999999999999" width="20" height="20" patternUnits="userSpaceOnUse"><rect width="20" height="20" fill="#062a2a"/><rect width="10" height="10" fill="#010101"/><rect x="10" y="10" width="10" height="10" fill="#010101"/></pattern></defs><rect x="1626.500" y="894.0999999999999" width="73.600" height="19.400" rx="4" fill="url(#pv903)" stroke="#0b8f8f" stroke-width="1"/><rect x="1634.0" y="900.0" width="2.800" height="8" fill="#fff"/><rect x="1646.0" y="900.0" width="2.800" height="8" fill="#fff"/><rect x="1658.0" y="900.0" width="2.800" height="8" fill="#fff"/><rect x="1670.0" y="900.0" width="2.800" height="8" fill="#fff"/><rect x="1682.0" y="900.0" width="2.800" height="8" fill="#fff"/><rect x="1694.0" y="900.0" width="2.800" height="8" fill="#fff"/><rect x="1705.4" y="900.8" width="5.599999999999909" height="5" fill="#5583d0"/><rect x="1705.4" y="900.8" width="5.599999999999909" height="1" fill="#a09c98"/><rect x="1705.4" y="904.8" width="5.599999999999909" height="1" fill="#a09c98"/><rect x="1711" y="900.8" width="177.4000000000001" height="5" fill="#0a379c"/><rect x="1711" y="901.5999999999999" width="177.00000000000009" height="3.200" fill="#fff"/><circle cx="1711" cy="903.3" r="6" fill="#fff"/></svg><div class="a" style="left:1581px;top:932.4px;width:318px;height:23px;background:#3b3b3a;border-top:1px solid #333332;box-sizing:border-box"></div><div class="a" style="left:1582.4px;top:932.4px;width:147.4px;height:23px;background:#323231;border-radius:6px 6px 0 0"></div><svg style="left:1584px;top:936px;" width="21" height="16" viewBox="1584 936 21 16"><defs><pattern id="ck936" x="1584" y="936" width="5" height="4" patternUnits="userSpaceOnUse"><rect width="5" height="4" fill="#020202"/><rect width="2.5" height="2" fill="#7c7c7c"/><rect x="2.5" y="2" width="2.5" height="2" fill="#7c7c7c"/></pattern></defs><rect x="1584" y="936" width="20" height="16" fill="url(#ck936)"/></svg><span class="t" style="left:1609.30px;top:935.96px;font:bold 13.4px/16px 'Liberation Sans','DejaVu Sans',sans-serif;color:#ffffff;letter-spacing:-0.256px;">Mode</span><span class="t" style="left:1648.20px;top:962.96px;font:normal 13.4px/16px 'Liberation Sans','DejaVu Sans',sans-serif;color:#dfdbd2;letter-spacing:-0.098px;">Working modes</span><div class="a" style="left:1645.4px;top:980.4px;width:129.4px;height:39.6px;background:linear-gradient(#2a2a29,#2c2c2b 55%,#474746);border-radius:12px"></div><div class="a" style="left:1650px;top:985px;width:29px;height:29.4px;background:#1a1a19;border-radius:9px 0 0 9px"></div><div class="a" style="left:1679.6px;top:985px;width:29.4px;height:29.4px;background:linear-gradient(#5c5c5b,#4a4a49);border-radius:0"></div><div class="a" style="left:1709.8px;top:985px;width:29.4px;height:29.4px;background:linear-gradient(#5c5c5b,#4a4a49);border-radius:0"></div><div class="a" style="left:1740px;top:985px;width:29.4px;height:29.4px;background:linear-gradient(#5c5c5b,#4a4a49);border-radius:0 9px 9px 0"></div><svg style="left:1645px;top:980px;" width="130" height="40" viewBox="1645 980 130 40"><path d="M1658 993.600l10.600 11.600" stroke="#fff" stroke-width="1.300"/><path d="M1657.400 992.800l6.600 1.400-5.200 5.200z" fill="#fff"/><path d="M1691.400 992.800l4.200 9.600M1696.600 992.800l-4.200 9.600" stroke="#f0f0f0" stroke-width="1"/><circle cx="1691" cy="1004.600" r="1.900" fill="none" stroke="#f0f0f0" stroke-width="0.900"/><circle cx="1696.800" cy="1004.600" r="1.900" fill="none" stroke="#f0f0f0" stroke-width="0.900"/><path d="M1720 1005.600v-9.400l2-2.800h4.200l2 2.800v9.400z" fill="#f4f4f4"/><path d="M1748.400 994l10.200 10.800" stroke="#fff" stroke-width="1.300"/><path d="M1747 992.600l6.400 1.200-5.200 5.200z" fill="#fff"/><circle cx="1759.200" cy="1005.600" r="2.800" fill="#fff"/></svg><span class="t" style="left:1648.20px;top:1032.76px;font:normal 13.4px/16px 'Liberation Sans','DejaVu Sans',sans-serif;color:#dfdbd2;letter-spacing:-0.157px;">Selection modes</span><div class="a" style="left:1645.4px;top:1050.4px;width:66px;height:3px;background:#232322;border-radius:12px 12px 0 0"></div></div>
<div class="timeline"><div class="a" style="left:40px;top:955px;width:17.4px;height:25px;background:#4196bd;border-radius:10px 0 0 10px"></div><div class="a" style="left:58px;top:955px;width:17.4px;height:25px;background:#4196bd;border-radius:0"></div><div class="a" style="left:76px;top:955px;width:17.4px;height:25px;background:#4196bd;border-radius:0"></div><div class="a" style="left:94px;top:955px;width:17.4px;height:25px;background:#4196bd;border-radius:0"></div><div class="a" style="left:112px;top:955px;width:17.4px;height:25px;background:#4196bd;border-radius:0 10px 10px 0"></div><svg style="left:40px;top:954px;" width="90" height="27" viewBox="40 954 90 27"><path d="M45.2 968.4h7M48.7 964.9v7" stroke="#fff" stroke-width="1.1"/><path d="M63.300 968.400h7M66.800 964.900v7" stroke="#fff" stroke-width="1.100"/><circle cx="66.800" cy="962.400" r="1.200" fill="#fff"/><path d="M81.200 968.400h7" stroke="#fff" stroke-width="1.100"/><circle cx="84.600" cy="962.600" r="1.300" fill="#fff"/><path d="M99 962.600l7.200 4.400-3.200 0.600 2.400 4.800-1.800 1-2.400-4.800-2.200 2.400z" fill="#fff"/><path d="M117.200 963.600l1.800-1.200 3.600 5 2.200-1.600 0 7.800-7-2.600 2.400-1.600z" fill="#fff"/></svg><div class="a" style="left:130px;top:956px;width:138.4px;height:23px;background:linear-gradient(#4b4b49,#3b3b39);border-radius:4px 4px 0 0;box-shadow:0 0 0 1px rgba(0,0,0,.18)"></div><svg style="left:144px;top:964px;" width="12" height="10" viewBox="144 964 12 10"><path d="M146.800 966h7.200l-1.600 5.800h-7.200z" fill="#f2f200"/></svg><span class="t" style="left:168.00px;top:959.60px;font:normal 15px/18px 'Liberation Sans','DejaVu Sans',sans-serif;color:#dfdbd2;letter-spacing:0.645px;">Default</span><svg style="left:248px;top:963px;" width="12" height="12" viewBox="248 963 12 12"><path d="M250.200 965.300l7 7M257.200 965.300l-7 7" stroke="#6e6e6a" stroke-width="1.300"/></svg><svg style="left:40px;top:982px;" width="90" height="22" viewBox="40 982 90 22"><path d="M43.600 990.200h3.400l4.600-3.600v11l-4.600-3.600h-3.400z" fill="#fff"/><path d="M52 986.400a5.800 5.800 0 0 1 0 11.400" stroke="#c8c8c8" stroke-width="2.200" fill="none"/><rect x="66" y="990" width="22" height="4.600" fill="#5b86cf"/><rect x="66" y="990" width="22" height="1" fill="#8c9cc0"/><rect x="66" y="993.600" width="22" height="1" fill="#8c9cc0"/><rect x="88" y="989.800" width="38.600" height="5" fill="#0b3a9e"/><rect x="88" y="990.600" width="38" height="3.200" fill="#fff"/><circle cx="87.700" cy="992.400" r="5.700" fill="#fff"/></svg><div class="a" style="left:129.4px;top:980px;width:1445.6px;height:25.4px;background:linear-gradient(#324560,#1d2f50);border-left:1px solid #5b7aa6;border-bottom:1px solid #5d6d82;box-sizing:border-box"></div><div class="a" style="left:129.4px;top:1005.4px;width:1445.6px;height:25px;background:#1c1c1c;border-bottom:1px solid #9b9b99;box-sizing:border-box"></div><svg style="left:129px;top:1005px;" width="1446" height="26" viewBox="129 1005 1446 26"><rect x="196.96" y="1017.4" width="1" height="13" fill="#a8a8a6"/><rect x="265.23" y="1017.4" width="1" height="13" fill="#a8a8a6"/><rect x="333.50" y="1017.4" width="1" height="13" fill="#a8a8a6"/><rect x="401.76" y="1017.4" width="1" height="13" fill="#a8a8a6"/><rect x="470.02" y="1017.4" width="1" height="13" fill="#a8a8a6"/><rect x="538.29" y="1017.4" width="1" height="13" fill="#a8a8a6"/><rect x="606.56" y="1017.4" width="1" height="13" fill="#a8a8a6"/><rect x="674.82" y="1017.4" width="1" height="13" fill="#a8a8a6"/><rect x="743.09" y="1017.4" width="1" height="13" fill="#a8a8a6"/><rect x="811.35" y="1017.4" width="1" height="13" fill="#a8a8a6"/><rect x="879.62" y="1017.4" width="1" height="13" fill="#a8a8a6"/><rect x="947.88" y="1017.4" width="1" height="13" fill="#a8a8a6"/><rect x="1016.14" y="1017.4" width="1" height="13" fill="#a8a8a6"/><rect x="1084.41" y="1017.4" width="1" height="13" fill="#a8a8a6"/><rect x="1152.67" y="1017.4" width="1" height="13" fill="#a8a8a6"/><rect x="1220.94" y="1017.4" width="1" height="13" fill="#a8a8a6"/><rect x="1289.21" y="1017.4" width="1" height="13" fill="#a8a8a6"/><rect x="1357.47" y="1017.4" width="1" height="13" fill="#a8a8a6"/><rect x="1425.74" y="1017.4" width="1" height="13" fill="#a8a8a6"/><rect x="1494.00" y="1017.4" width="1" height="13" fill="#a8a8a6"/><rect x="1573.6" y="1006" width="1" height="24" fill="#8a8a88"/><path d="M133 1022h5.800v4.600l-2.900 3-2.900-3z" fill="#f4f4f4"/></svg><span class="t" style="left:200.06px;top:1008.85px;font:normal 14px/17px 'Liberation Sans','DejaVu Sans',sans-serif;color:#7e7e7c;letter-spacing:0.000px;">5</span><span class="t" style="left:268.33px;top:1008.85px;font:normal 14px/17px 'Liberation Sans','DejaVu Sans',sans-serif;color:#7e7e7c;letter-spacing:0.022px;">10</span><span class="t" style="left:336.60px;top:1008.85px;font:normal 14px/17px 'Liberation Sans','DejaVu Sans',sans-serif;color:#7e7e7c;letter-spacing:0.022px;">15</span><span class="t" style="left:404.86px;top:1008.85px;font:normal 14px/17px 'Liberation Sans','DejaVu Sans',sans-serif;color:#7e7e7c;letter-spacing:0.022px;">20</span><span class="t" style="left:473.12px;top:1008.85px;font:normal 14px/17px 'Liberation Sans','DejaVu Sans',sans-serif;color:#7e7e7c;letter-spacing:0.022px;">25</span><span class="t" style="left:541.39px;top:1008.85px;font:normal 14px/17px 'Liberation Sans','DejaVu Sans',sans-serif;color:#7e7e7c;letter-spacing:0.022px;">30</span><span class="t" style="left:609.66px;top:1008.85px;font:normal 14px/17px 'Liberation Sans','DejaVu Sans',sans-serif;color:#7e7e7c;letter-spacing:0.022px;">35</span><span class="t" style="left:677.92px;top:1008.85px;font:normal 14px/17px 'Liberation Sans','DejaVu Sans',sans-serif;color:#7e7e7c;letter-spacing:0.022px;">40</span><span class="t" style="left:746.19px;top:1008.85px;font:normal 14px/17px 'Liberation Sans','DejaVu Sans',sans-serif;color:#7e7e7c;letter-spacing:0.022px;">45</span><span class="t" style="left:814.45px;top:1008.85px;font:normal 14px/17px 'Liberation Sans','DejaVu Sans',sans-serif;color:#7e7e7c;letter-spacing:0.022px;">50</span><span class="t" style="left:882.72px;top:1008.85px;font:normal 14px/17px 'Liberation Sans','DejaVu Sans',sans-serif;color:#7e7e7c;letter-spacing:0.022px;">55</span><span class="t" style="left:950.98px;top:1008.85px;font:normal 14px/17px 'Liberation Sans','DejaVu Sans',sans-serif;color:#7e7e7c;letter-spacing:0.022px;">60</span><span class="t" style="left:1019.25px;top:1008.85px;font:normal 14px/17px 'Liberation Sans','DejaVu Sans',sans-serif;color:#7e7e7c;letter-spacing:0.022px;">65</span><span class="t" style="left:1087.51px;top:1008.85px;font:normal 14px/17px 'Liberation Sans','DejaVu Sans',sans-serif;color:#7e7e7c;letter-spacing:0.022px;">70</span><span class="t" style="left:1155.77px;top:1008.85px;font:normal 14px/17px 'Liberation Sans','DejaVu Sans',sans-serif;color:#7e7e7c;letter-spacing:0.022px;">75</span><span class="t" style="left:1224.04px;top:1008.85px;font:normal 14px/17px 'Liberation Sans','DejaVu Sans',sans-serif;color:#7e7e7c;letter-spacing:0.022px;">80</span><span class="t" style="left:1292.31px;top:1008.85px;font:normal 14px/17px 'Liberation Sans','DejaVu Sans',sans-serif;color:#7e7e7c;letter-spacing:0.022px;">85</span><span class="t" style="left:1360.57px;top:1008.85px;font:normal 14px/17px 'Liberation Sans','DejaVu Sans',sans-serif;color:#7e7e7c;letter-spacing:0.022px;">90</span><span class="t" style="left:1428.84px;top:1008.85px;font:normal 14px/17px 'Liberation Sans','DejaVu Sans',sans-serif;color:#7e7e7c;letter-spacing:0.022px;">95</span><span class="t" style="left:1497.10px;top:1008.85px;font:normal 14px/17px 'Liberation Sans','DejaVu Sans',sans-serif;color:#7e7e7c;letter-spacing:0.120px;">100</span><div class="a" style="left:40px;top:1005.4px;width:29.2px;height:25px;background:#4196bd;border-radius:12px 0 0 12px"></div><div class="a" style="left:70px;top:1005.4px;width:29.2px;height:25px;background:#4196bd;border-radius:0"></div><div class="a" style="left:100px;top:1005.4px;width:29.2px;height:25px;background:#4196bd;border-radius:0 12px 12px 0"></div><svg style="left:40px;top:1005px;" width="90" height="26" viewBox="40 1005 90 26"><path d="M50.200 1011.600l10 6.200-10 6.200z" fill="#fff"/><rect x="78.600" y="1012" width="12.600" height="12" fill="#fff"/><rect x="108.200" y="1012" width="2.600" height="12" fill="#fff"/><path d="M120.600 1011.800v12.400l-9.600-6.200z" fill="#fff"/></svg><div class="a" style="left:40.4px;top:1033px;width:58.6px;height:21px;background:#2b2b2b;border:1px solid #242424;box-sizing:border-box;border-radius:2px"></div><span class="t" style="left:43.60px;top:1035.20px;font:normal 15px/18px 'Liberation Sans','DejaVu Sans',sans-serif;color:#dfdbd2;letter-spacing:0.000px;">0</span><svg style="left:84px;top:1034px;" width="14" height="20" viewBox="84 1034 14 20"><path d="M83.200 1034v19.600M83.200 1043.600h15" stroke="#222" stroke-width="1"/><path d="M88.400 1040.200h4.800l-2.400-3.400zM88.400 1046.800h4.800l-2.400 3.400z" fill="#dfdbd2"/></svg><div class="a" style="left:100px;top:1033px;width:29px;height:21px;background:#4196bd;border-radius:0 11px 11px 0"></div><svg style="left:100px;top:1033px;" width="30" height="22" viewBox="100 1033 30 22"><path d="M108.400 1048.600l12.600-11" stroke="#fff" stroke-width="0.900"/><circle cx="108.200" cy="1048.800" r="1.300" fill="#fff"/><circle cx="121.200" cy="1037.400" r="1.300" fill="#fff"/></svg><div class="a" style="left:129.4px;top:1030.4px;width:1445.6px;height:24.6px;background:linear-gradient(#181818,#3a3a3a 45%,#6c6c6c 100%)"></div><div class="a" style="left:129.4px;top:1030.6px;width:13.6px;height:23.2px;border:1px solid #f4f4f4;box-sizing:border-box;background:linear-gradient(#3a3a3a 0,#4a4a4a 24%,#8c8c00 24%,#8c8c00 80%,#6a6a6a 80%)"></div></div>
<div class="statusbar"><span class="t" style="left:5.40px;top:1059.00px;font:normal 15px/18px 'Liberation Sans','DejaVu Sans',sans-serif;color:#dfdbd2;letter-spacing:-0.028px;">Selection: you have 3 points selected. To unselect them just press ESC</span><span class="t" style="left:1766.40px;top:1059.80px;font:normal 15px/18px 'Liberation Sans','DejaVu Sans',sans-serif;color:#dfdbd2;letter-spacing:-0.129px;">Zoom:</span><div class="a" style="left:1824px;top:1058.4px;width:94px;height:19.6px;background:#373737;border:1px solid #2a2a2a;box-sizing:border-box;border-radius:2px"></div><span class="t" style="left:1827.00px;top:1059.80px;font:normal 15px/18px 'Liberation Sans','DejaVu Sans',sans-serif;color:#dfdbd2;letter-spacing:-0.316px;">91%</span><svg style="left:1900px;top:1058px;" width="18" height="20" viewBox="1900 1058 18 20"><path d="M1902.400 1059v18M1902.400 1068h15" stroke="#2a2a2a" stroke-width="1"/><path d="M1907.400 1065h4.800l-2.400-3.400zM1907.400 1070.600h4.800l-2.400 3.400z" fill="#dfdbd2"/></svg></div>
</div></body></html>
